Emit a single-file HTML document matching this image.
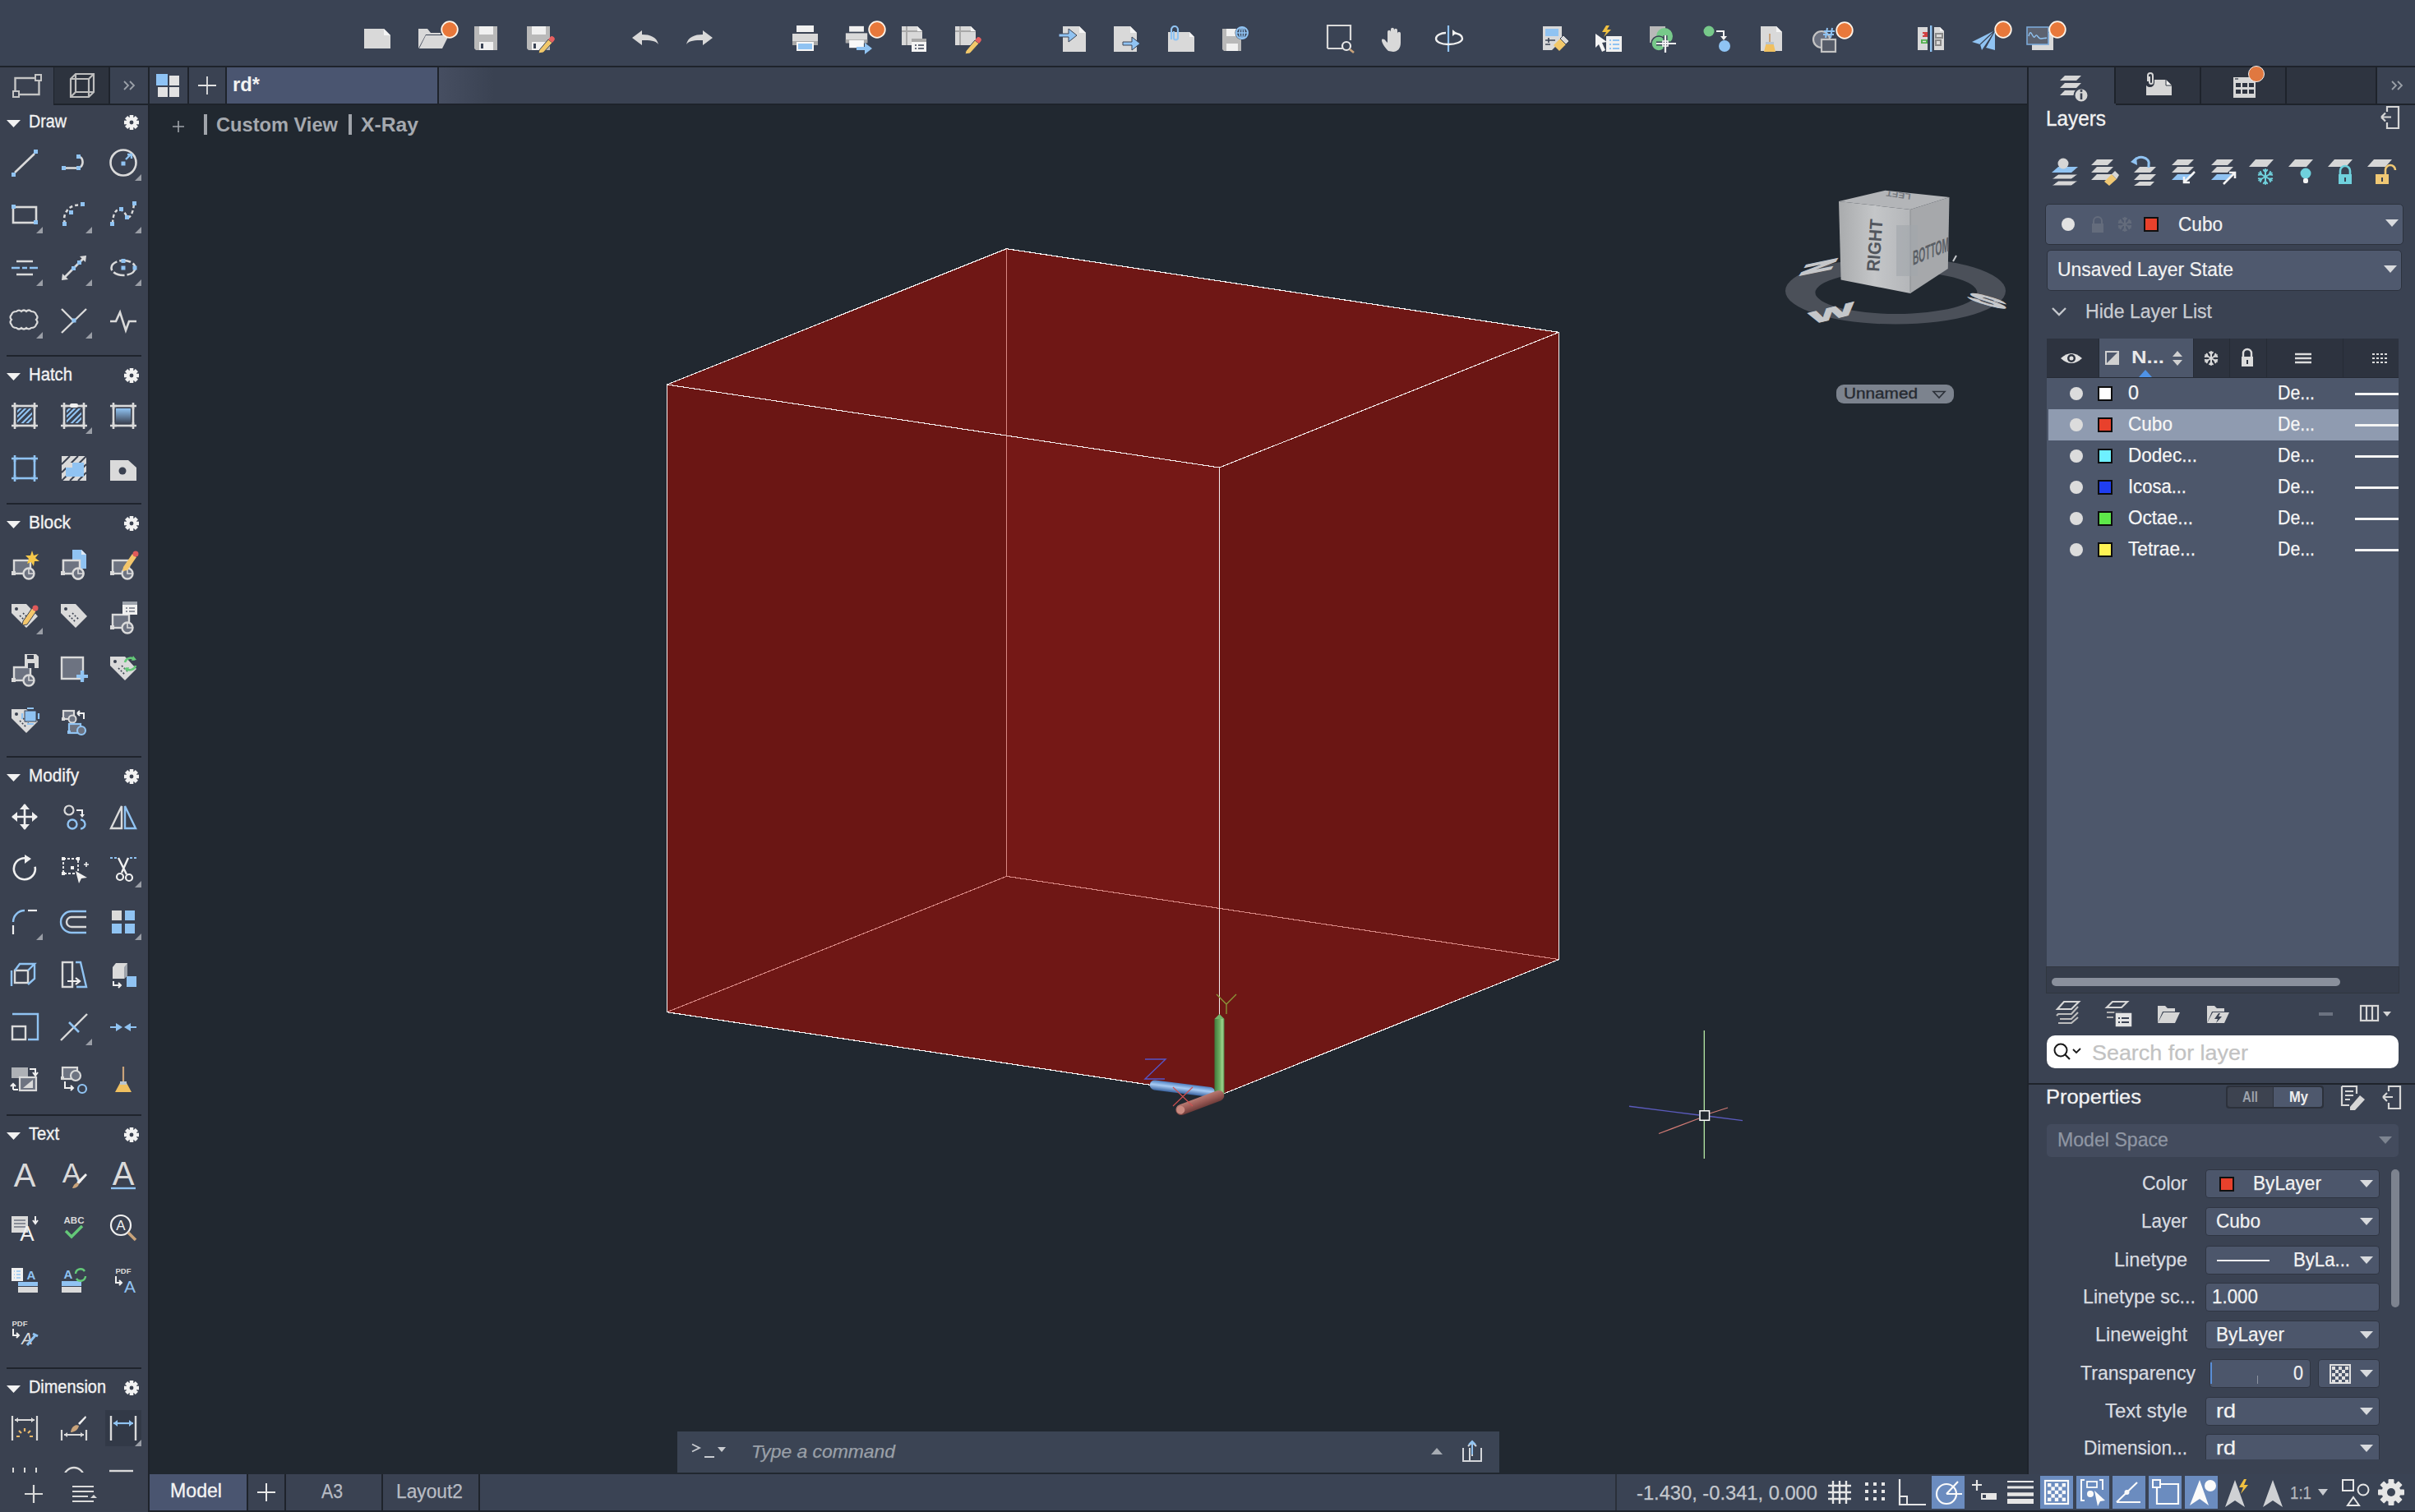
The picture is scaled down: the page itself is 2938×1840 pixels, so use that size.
<!DOCTYPE html>
<html><head><meta charset="utf-8"><style>
html,body{margin:0;padding:0;width:2938px;height:1840px;overflow:hidden;background:#212830;font-family:"Liberation Sans",sans-serif;}
body{position:relative}
div{box-sizing:border-box}
</style></head><body>
<div style="position:absolute;left:0px;top:0px;width:2938px;height:80px;background:#3a4354;"></div>
<div style="position:absolute;left:0px;top:80px;width:2938px;height:2px;background:#1e232b;"></div>
<div style="position:absolute;left:0px;top:82px;width:2938px;height:44px;background:#3a4252;"></div>
<div style="position:absolute;left:0px;top:126px;width:2938px;height:2px;background:#1e232b;"></div>
<div style="position:absolute;left:0px;top:82px;width:65px;height:46px;background:#3a4150;"></div>
<div style="position:absolute;left:65px;top:82px;width:1px;height:44px;background:#1e232b;"></div>
<div style="position:absolute;left:66px;top:82px;width:66px;height:44px;background:#2d333e;"></div>
<div style="position:absolute;left:132px;top:82px;width:2px;height:44px;background:#1e232b;"></div>
<div style="position:absolute;left:134px;top:82px;width:46px;height:44px;background:#3a4252;"></div>
<div style="position:absolute;left:180px;top:82px;width:2px;height:1758px;background:#1e232b;"></div>
<div style="position:absolute;left:0px;top:128px;width:180px;height:1712px;background:#3a4150;"></div>
<div style="position:absolute;left:182px;top:82px;width:46px;height:44px;background:#3a4252;"></div>
<div style="position:absolute;left:228px;top:82px;width:2px;height:44px;background:#1e232b;"></div>
<div style="position:absolute;left:230px;top:82px;width:44px;height:44px;background:#3a4252;"></div>
<div style="position:absolute;left:274px;top:82px;width:2px;height:44px;background:#1e232b;"></div>
<div style="position:absolute;left:276px;top:82px;width:256px;height:44px;background:#4a5570;"></div>
<div style="position:absolute;left:532px;top:82px;width:2px;height:44px;background:#1e232b;"></div>
<div style="position:absolute;left:534px;top:82px;width:1932px;height:44px;background:linear-gradient(90deg,#464e61,#3a4252 3.5%);"></div>
<div style="position:absolute;left:2466px;top:82px;width:2px;height:1712px;background:#1e232b;"></div>
<div style="position:absolute;left:182px;top:128px;width:2284px;height:1666px;background:#212830;"></div>
<div style="position:absolute;left:2468px;top:82px;width:470px;height:1712px;background:#3a4252;"></div>
<div style="position:absolute;left:190px;top:90px;width:14px;height:14px;background:#8ec3f5;"></div>
<div style="position:absolute;left:206px;top:92px;width:12px;height:12px;background:#e2e2e2;"></div>
<div style="position:absolute;left:192px;top:106px;width:12px;height:12px;background:#e2e2e2;"></div>
<div style="position:absolute;left:206px;top:106px;width:12px;height:12px;background:#e2e2e2;"></div>
<svg style="position:absolute;left:240px;top:92px;overflow:visible;" width="24" height="24" viewBox="0 0 24 24"><path d="M12 1 V23 M1 12 H23" stroke="#e2e2e2" stroke-width="1.8"/></svg>
<div style="position:absolute;left:282.50px;top:92.33px;font-size:23.26px;line-height:23.26px;color:#f2f2f2;white-space:nowrap;font-weight:bold;transform:scaleX(1.0214);transform-origin:0 0;">rd*</div>
<svg style="position:absolute;left:15px;top:90px;overflow:visible;" width="36" height="30" viewBox="0 0 36 30"><rect x="3.5" y="5" width="29" height="20" fill="none" stroke="#c4c4c4" stroke-width="2.4"/><rect x="28" y="1" width="7" height="7" fill="#3a4150" stroke="#c4c4c4" stroke-width="2"/><rect x="1" y="21" width="7" height="7" fill="#3a4150" stroke="#c4c4c4" stroke-width="2"/></svg>
<svg style="position:absolute;left:84px;top:88px;overflow:visible;" width="32" height="32" viewBox="0 0 32 32"><path d="M2 8 L8 2 H30 V24 L24 30 H2 Z M2 8 H24 V30 M24 8 L30 2 M8 2 V24 H30 M8 24 L2 30" fill="none" stroke="#bdbdbd" stroke-width="2.2"/></svg>
<svg style="position:absolute;left:149px;top:97px;overflow:visible;" width="18" height="14" viewBox="0 0 18 14"><path d="M2 2 L7 7 L2 12 M9 2 L14 7 L9 12" fill="none" stroke="#9ba0a8" stroke-width="1.8"/></svg>
<svg style="position:absolute;left:8px;top:146px;overflow:visible;" width="17" height="9" viewBox="0 0 17 9"><path d="M0 0 L17 0 L8.5 9 Z" fill="#f2f2f2"/></svg>
<div style="position:absolute;left:34.50px;top:136.56px;font-size:21.80px;line-height:21.80px;color:#f2f2f2;white-space:nowrap;transform:scaleX(0.9042);transform-origin:0 0;-webkit-text-stroke:0.35px #f2f2f2;">Draw</div>
<svg style="position:absolute;left:140px;top:129px;overflow:visible" width="40" height="40" viewBox="-20 -20 40 40"><rect x="-2.3" y="-9" width="4.6" height="18" fill="#f2f2f2" transform="rotate(0)"/><rect x="-2.3" y="-9" width="4.6" height="18" fill="#f2f2f2" transform="rotate(45)"/><rect x="-2.3" y="-9" width="4.6" height="18" fill="#f2f2f2" transform="rotate(90)"/><rect x="-2.3" y="-9" width="4.6" height="18" fill="#f2f2f2" transform="rotate(135)"/><circle r="6.4799999999999995" fill="#f2f2f2"/><circle r="2.43" fill="#3a4150"/></svg>
<svg style="position:absolute;left:10px;top:178px;overflow:visible" width="40" height="40" viewBox="-20 -20 40 40"><line x1="-12" y1="12" x2="12" y2="-11" stroke="#dadada" stroke-width="2.6"/><rect x="-16" y="12" width="5" height="5" fill="#90c3f2"/><rect x="11" y="-16" width="5" height="5" fill="#90c3f2"/></svg>
<svg style="position:absolute;left:70px;top:178px;overflow:visible" width="40" height="40" viewBox="-20 -20 40 40"><line x1="-11" y1="6.5" x2="3" y2="6.5" stroke="#dadada" stroke-width="2.6"/><path d="M5 -8 A7.5 7.5 0 0 1 5 6.5" fill="none" stroke="#dadada" stroke-width="2.6"/><rect x="-15" y="4" width="5" height="5" fill="#90c3f2"/><rect x="3" y="4" width="5" height="5" fill="#90c3f2"/><rect x="3" y="-10" width="5" height="5" fill="#90c3f2"/></svg>
<svg style="position:absolute;left:130px;top:178px;overflow:visible" width="40" height="40" viewBox="-20 -20 40 40"><circle r="15.5" fill="none" stroke="#dadada" stroke-width="2.6"/><rect x="-2.5" y="-1.5" width="5" height="5" fill="#90c3f2"/><path d="M3 -4 L9 -10 M5 -10 L10 -10 L10 -5" stroke="#90c3f2" stroke-width="2.4" fill="none"/></svg>
<svg style="position:absolute;left:130px;top:178px;overflow:visible" width="40" height="40" viewBox="-20 -20 40 40"><path d="M22 14 L22 22 L14 22 Z" fill="#9a9ea6"/></svg>
<svg style="position:absolute;left:10px;top:242px;overflow:visible" width="40" height="40" viewBox="-20 -20 40 40"><rect x="-14" y="-10" width="28" height="19" fill="none" stroke="#dadada" stroke-width="2.6"/><rect x="-16" y="-13" width="5" height="5" fill="#90c3f2"/><rect x="11" y="6" width="5" height="5" fill="#90c3f2"/></svg>
<svg style="position:absolute;left:10px;top:242px;overflow:visible" width="40" height="40" viewBox="-20 -20 40 40"><path d="M22 14 L22 22 L14 22 Z" fill="#9a9ea6"/></svg>
<svg style="position:absolute;left:70px;top:242px;overflow:visible" width="40" height="40" viewBox="-20 -20 40 40"><path d="M-11 10 A17 17 0 0 1 9 -12" fill="none" stroke="#dadada" stroke-width="2.6" stroke-dasharray="4 3"/><rect x="-14" y="8" width="5" height="5" fill="#90c3f2"/><rect x="-6" y="-6" width="5" height="5" fill="#90c3f2"/><rect x="8" y="-16" width="5" height="5" fill="#90c3f2"/></svg>
<svg style="position:absolute;left:70px;top:242px;overflow:visible" width="40" height="40" viewBox="-20 -20 40 40"><path d="M22 14 L22 22 L14 22 Z" fill="#9a9ea6"/></svg>
<svg style="position:absolute;left:130px;top:242px;overflow:visible" width="40" height="40" viewBox="-20 -20 40 40"><path d="M-13 10 C-12 -14 0 -8 4 1 C7 6 12 -2 13 -14" fill="none" stroke="#dadada" stroke-width="2.4" stroke-dasharray="4 3"/><rect x="-16" y="8" width="5" height="5" fill="#90c3f2"/><rect x="-5" y="-10" width="5" height="5" fill="#90c3f2"/><rect x="2" y="0" width="5" height="5" fill="#90c3f2"/><rect x="11" y="-17" width="5" height="5" fill="#90c3f2"/></svg>
<svg style="position:absolute;left:130px;top:242px;overflow:visible" width="40" height="40" viewBox="-20 -20 40 40"><path d="M22 14 L22 22 L14 22 Z" fill="#9a9ea6"/></svg>
<svg style="position:absolute;left:10px;top:306px;overflow:visible" width="40" height="40" viewBox="-20 -20 40 40"><path d="M-10 -8 H10 M-10 8 H10" stroke="#dadada" stroke-width="2.4"/><path d="M-16 0 H-6 M-3 0 H3 M6 0 H16" stroke="#90c3f2" stroke-width="2.4"/></svg>
<svg style="position:absolute;left:10px;top:306px;overflow:visible" width="40" height="40" viewBox="-20 -20 40 40"><path d="M22 14 L22 22 L14 22 Z" fill="#9a9ea6"/></svg>
<svg style="position:absolute;left:70px;top:306px;overflow:visible" width="40" height="40" viewBox="-20 -20 40 40"><line x1="-13" y1="13" x2="13" y2="-13" stroke="#dadada" stroke-width="2.6"/><path d="M-15 15 L-14 7 L-7 14 Z M15 -15 L14 -7 L7 -14 Z" fill="#dadada"/><rect x="-3" y="-2" width="5" height="5" fill="#90c3f2"/><rect x="4" y="-9" width="5" height="5" fill="#90c3f2"/></svg>
<svg style="position:absolute;left:70px;top:306px;overflow:visible" width="40" height="40" viewBox="-20 -20 40 40"><path d="M22 14 L22 22 L14 22 Z" fill="#9a9ea6"/></svg>
<svg style="position:absolute;left:130px;top:306px;overflow:visible" width="40" height="40" viewBox="-20 -20 40 40"><ellipse rx="14.5" ry="9" fill="none" stroke="#dadada" stroke-width="2.6" stroke-dasharray="14 3"/><rect x="-2.5" y="-2.5" width="5" height="5" fill="#90c3f2"/><rect x="-2.5" y="-11" width="5" height="5" fill="#90c3f2"/><rect x="11.5" y="-2.5" width="5" height="5" fill="#90c3f2"/></svg>
<svg style="position:absolute;left:130px;top:306px;overflow:visible" width="40" height="40" viewBox="-20 -20 40 40"><path d="M22 14 L22 22 L14 22 Z" fill="#9a9ea6"/></svg>
<svg style="position:absolute;left:10px;top:370px;overflow:visible" width="40" height="40" viewBox="-20 -20 40 40"><path d="M-10 -11 q3 -3 6 0 q3 -3 6 0 q3 -3 6 0 q5 0 6 4 q3 3 0 6 q3 3 0 6 q-1 4 -6 4 q-3 3 -6 0 q-3 3 -6 0 q-3 3 -6 0 q-5 0 -6 -4 q-3 -3 0 -6 q-3 -3 0 -6 q1 -4 6 -4 Z" fill="none" stroke="#dadada" stroke-width="2.2"/></svg>
<svg style="position:absolute;left:10px;top:370px;overflow:visible" width="40" height="40" viewBox="-20 -20 40 40"><path d="M22 14 L22 22 L14 22 Z" fill="#9a9ea6"/></svg>
<svg style="position:absolute;left:70px;top:370px;overflow:visible" width="40" height="40" viewBox="-20 -20 40 40"><path d="M-15 -14 L-1 0 M15 -14 L-15 15" stroke="#dadada" stroke-width="2.4"/><rect x="-2.5" y="-2.5" width="5" height="5" fill="#90c3f2"/></svg>
<svg style="position:absolute;left:70px;top:370px;overflow:visible" width="40" height="40" viewBox="-20 -20 40 40"><path d="M22 14 L22 22 L14 22 Z" fill="#9a9ea6"/></svg>
<svg style="position:absolute;left:130px;top:370px;overflow:visible" width="40" height="40" viewBox="-20 -20 40 40"><path d="M-16 1 H-9 L-4 -10 L3 12 L7 1 H16" fill="none" stroke="#dadada" stroke-width="2.6"/></svg>
<div style="position:absolute;left:8px;top:432px;width:164px;height:2px;background:#1f242d;"></div>
<svg style="position:absolute;left:8px;top:454px;overflow:visible;" width="17" height="9" viewBox="0 0 17 9"><path d="M0 0 L17 0 L8.5 9 Z" fill="#f2f2f2"/></svg>
<div style="position:absolute;left:34.50px;top:444.56px;font-size:21.80px;line-height:21.80px;color:#f2f2f2;white-space:nowrap;transform:scaleX(0.9306);transform-origin:0 0;-webkit-text-stroke:0.35px #f2f2f2;">Hatch</div>
<svg style="position:absolute;left:140px;top:437px;overflow:visible" width="40" height="40" viewBox="-20 -20 40 40"><rect x="-2.3" y="-9" width="4.6" height="18" fill="#f2f2f2" transform="rotate(0)"/><rect x="-2.3" y="-9" width="4.6" height="18" fill="#f2f2f2" transform="rotate(45)"/><rect x="-2.3" y="-9" width="4.6" height="18" fill="#f2f2f2" transform="rotate(90)"/><rect x="-2.3" y="-9" width="4.6" height="18" fill="#f2f2f2" transform="rotate(135)"/><circle r="6.4799999999999995" fill="#f2f2f2"/><circle r="2.43" fill="#3a4150"/></svg>
<svg style="position:absolute;left:10px;top:486px;overflow:visible" width="40" height="40" viewBox="-20 -20 40 40"><rect x="-12" y="-12" width="24" height="24" fill="none" stroke="#dadada" stroke-width="2.6"/><path d="M-16 -12 H-8 M8 -12 H16 M-16 12 H-8 M8 12 H16 M-12 -16 V-8 M-12 8 V16 M12 -16 V-8 M12 8 V16" stroke="#dadada" stroke-width="2.6"/><clipPath id="hc"><rect x="-9" y="-9" width="18" height="18"/></clipPath><g clip-path="url(#hc)" stroke="#90c3f2" stroke-width="2.2"><path d="M-14 6 L6 -14 M-14 12 L12 -14 M-8 14 L14 -8 M-2 14 L14 -2 M-14 0 L0 -14"/></g></svg>
<svg style="position:absolute;left:70px;top:486px;overflow:visible" width="40" height="40" viewBox="-20 -20 40 40"><rect x="-12" y="-12" width="24" height="24" fill="none" stroke="#dadada" stroke-width="2.6"/><path d="M-16 -12 H-8 M8 -12 H16 M-16 12 H-8 M8 12 H16 M-12 -16 V-8 M-12 8 V16 M12 -16 V-8 M12 8 V16" stroke="#dadada" stroke-width="2.6"/><clipPath id="hc2"><rect x="-9" y="-9" width="18" height="18"/></clipPath><g clip-path="url(#hc2)" stroke="#90c3f2" stroke-width="2.2"><path d="M-14 6 L6 -14 M-14 12 L12 -14 M-8 14 L14 -8 M-2 14 L14 -2 M-14 0 L0 -14"/></g><rect x="-5" y="-15" width="10" height="5" rx="2" fill="#f0f0f0"/></svg>
<svg style="position:absolute;left:70px;top:486px;overflow:visible" width="40" height="40" viewBox="-20 -20 40 40"><path d="M22 14 L22 22 L14 22 Z" fill="#9a9ea6"/></svg>
<svg style="position:absolute;left:130px;top:486px;overflow:visible" width="40" height="40" viewBox="-20 -20 40 40"><rect x="-12" y="-12" width="24" height="24" fill="none" stroke="#dadada" stroke-width="2.6"/><path d="M-16 -12 H-8 M8 -12 H16 M-16 12 H-8 M8 12 H16 M-12 -16 V-8 M-12 8 V16 M12 -16 V-8 M12 8 V16" stroke="#dadada" stroke-width="2.6"/><defs><linearGradient id="gd" x1="0" y1="0" x2="0" y2="1"><stop offset="0" stop-color="#90c3f2"/><stop offset="1" stop-color="#3d4556"/></linearGradient></defs><rect x="-9" y="-9" width="18" height="18" fill="url(#gd)"/></svg>
<svg style="position:absolute;left:10px;top:550px;overflow:visible" width="40" height="40" viewBox="-20 -20 40 40"><rect x="-12" y="-12" width="24" height="24" fill="none" stroke="#90c3f2" stroke-width="2.6"/><path d="M-16 -12 H-8 M8 -12 H16 M-16 12 H-8 M8 12 H16 M-12 -16 V-8 M-12 8 V16 M12 -16 V-8 M12 8 V16" stroke="#90c3f2" stroke-width="2.6"/></svg>
<svg style="position:absolute;left:70px;top:550px;overflow:visible" width="40" height="40" viewBox="-20 -20 40 40"><rect x="-15" y="-15" width="30" height="30" fill="#dadada"/><g stroke="#3a4150" stroke-width="2"><path d="M-15 -5 L-5 -15 M-15 5 L5 -15 M-15 15 L15 -15 M-5 15 L15 -5 M5 15 L15 5"/></g><rect x="-10" y="-7" width="22" height="17" fill="#90c3f2"/><rect x="-10" y="-7" width="8" height="6" fill="#dadada"/></svg>
<svg style="position:absolute;left:130px;top:550px;overflow:visible" width="40" height="40" viewBox="-20 -20 40 40"><path d="M-16 -10 L6 -10 L16 -1 L16 15 L-16 15 Z" fill="#dadada"/><circle cx="-1" cy="3" r="4.5" fill="#3a4150"/></svg>
<div style="position:absolute;left:8px;top:612px;width:164px;height:2px;background:#1f242d;"></div>
<svg style="position:absolute;left:8px;top:634px;overflow:visible;" width="17" height="9" viewBox="0 0 17 9"><path d="M0 0 L17 0 L8.5 9 Z" fill="#f2f2f2"/></svg>
<div style="position:absolute;left:34.50px;top:624.56px;font-size:21.80px;line-height:21.80px;color:#f2f2f2;white-space:nowrap;transform:scaleX(0.9566);transform-origin:0 0;-webkit-text-stroke:0.35px #f2f2f2;">Block</div>
<svg style="position:absolute;left:140px;top:617px;overflow:visible" width="40" height="40" viewBox="-20 -20 40 40"><rect x="-2.3" y="-9" width="4.6" height="18" fill="#f2f2f2" transform="rotate(0)"/><rect x="-2.3" y="-9" width="4.6" height="18" fill="#f2f2f2" transform="rotate(45)"/><rect x="-2.3" y="-9" width="4.6" height="18" fill="#f2f2f2" transform="rotate(90)"/><rect x="-2.3" y="-9" width="4.6" height="18" fill="#f2f2f2" transform="rotate(135)"/><circle r="6.4799999999999995" fill="#f2f2f2"/><circle r="2.43" fill="#3a4150"/></svg>
<svg style="position:absolute;left:10px;top:666px;overflow:visible" width="40" height="40" viewBox="-20 -20 40 40"><g transform="translate(0,0)"><rect x="-13" y="-4" width="20" height="16" fill="#6d7381" stroke="#dadada" stroke-width="2.4"/><rect x="-16" y="9" width="5" height="5" fill="#dadada"/><circle cx="5" cy="12" r="6.5" fill="#6d7381" stroke="#dadada" stroke-width="2.4"/><path d="M5 6 V12 H11" stroke="#dadada" stroke-width="1.6" fill="none"/></g><path d="M9 -16 L11 -10 L17 -12 L13 -7 L18 -3 L12 -3 L11 3 L8 -2 L3 0 L5 -6 L1 -10 L7 -10 Z" fill="#f6c84a"/></svg>
<svg style="position:absolute;left:70px;top:666px;overflow:visible" width="40" height="40" viewBox="-20 -20 40 40"><g transform="translate(0,0)"><rect x="-13" y="-4" width="20" height="16" fill="#6d7381" stroke="#dadada" stroke-width="2.4"/><rect x="-16" y="9" width="5" height="5" fill="#dadada"/><circle cx="5" cy="12" r="6.5" fill="#6d7381" stroke="#dadada" stroke-width="2.4"/><path d="M5 6 V12 H11" stroke="#dadada" stroke-width="1.6" fill="none"/></g><path d="M-2 -17 H9 L15 -11 V6 H-2 Z" fill="#90c3f2"/><path d="M9 -17 V-11 H15" fill="#dfe9f5"/><g transform="translate(0,0)"><rect x="-13" y="-4" width="20" height="16" fill="#6d7381" stroke="#dadada" stroke-width="2.4"/><rect x="-16" y="9" width="5" height="5" fill="#dadada"/><circle cx="5" cy="12" r="6.5" fill="#6d7381" stroke="#dadada" stroke-width="2.4"/><path d="M5 6 V12 H11" stroke="#dadada" stroke-width="1.6" fill="none"/></g></svg>
<svg style="position:absolute;left:130px;top:666px;overflow:visible" width="40" height="40" viewBox="-20 -20 40 40"><g transform="translate(0,0)"><rect x="-13" y="-4" width="20" height="16" fill="#6d7381" stroke="#dadada" stroke-width="2.4"/><rect x="-16" y="9" width="5" height="5" fill="#dadada"/><circle cx="5" cy="12" r="6.5" fill="#6d7381" stroke="#dadada" stroke-width="2.4"/><path d="M5 6 V12 H11" stroke="#dadada" stroke-width="1.6" fill="none"/></g><path d="M0 4 L11 -12 L16 -8 L5 8 L-1 9 Z" fill="#f4c66b"/><circle cx="15" cy="-12" r="3.5" fill="#e05a5a"/></svg>
<svg style="position:absolute;left:10px;top:730px;overflow:visible" width="40" height="40" viewBox="-20 -20 40 40"><path d="M-16 -15 H2 L16 0 L2 14 L-16 -4 Z" fill="#dadada"/><circle cx="-10" cy="-9" r="2" fill="#3a4150"/><path d="M-6 -1 L2 7 M-2 -4 L6 4" stroke="#3a4150" stroke-width="1.6" stroke-dasharray="2 2"/><path d="M-2 6 L9 -10 L14 -6 L3 10 L-3 11 Z" fill="#f4c66b" stroke="#3a4150" stroke-width="1"/><circle cx="13" cy="-10" r="3.5" fill="#e05a5a"/></svg>
<svg style="position:absolute;left:10px;top:730px;overflow:visible" width="40" height="40" viewBox="-20 -20 40 40"><path d="M22 14 L22 22 L14 22 Z" fill="#9a9ea6"/></svg>
<svg style="position:absolute;left:70px;top:730px;overflow:visible" width="40" height="40" viewBox="-20 -20 40 40"><g transform="rotate(0)"><path d="M-16 -15 H2 L16 0 L2 14 L-16 -4 Z" fill="#dadada"/><circle cx="-10" cy="-9" r="2" fill="#3a4150"/><path d="M-6 -1 L2 7 M-2 -4 L6 4" stroke="#3a4150" stroke-width="1.6" stroke-dasharray="2 2"/></g></svg>
<svg style="position:absolute;left:130px;top:730px;overflow:visible" width="40" height="40" viewBox="-20 -20 40 40"><g transform="translate(0,2)"><rect x="-13" y="-4" width="20" height="16" fill="#6d7381" stroke="#dadada" stroke-width="2.4"/><rect x="-16" y="9" width="5" height="5" fill="#dadada"/><circle cx="5" cy="12" r="6.5" fill="#6d7381" stroke="#dadada" stroke-width="2.4"/><path d="M5 6 V12 H11" stroke="#dadada" stroke-width="1.6" fill="none"/></g><rect x="-1" y="-18" width="18" height="16" fill="#f0f0f0"/><rect x="-1" y="-18" width="18" height="4" fill="#9da3ad"/><path d="M3 -10 H5 M7 -10 H14 M3 -6 H5 M7 -6 H14" stroke="#6d7381" stroke-width="1.6"/></svg>
<svg style="position:absolute;left:10px;top:794px;overflow:visible" width="40" height="40" viewBox="-20 -20 40 40"><g transform="translate(0,2)"><rect x="-13" y="-4" width="20" height="16" fill="#6d7381" stroke="#dadada" stroke-width="2.4"/><rect x="-16" y="9" width="5" height="5" fill="#dadada"/><circle cx="5" cy="12" r="6.5" fill="#6d7381" stroke="#dadada" stroke-width="2.4"/><path d="M5 6 V12 H11" stroke="#dadada" stroke-width="1.6" fill="none"/></g><path d="M0 -18 H14 L17 -15 V-1 H0 Z" fill="#dadada"/><rect x="3" y="-17" width="8" height="5" fill="#3a4150"/><rect x="4" y="-7" width="8" height="6" fill="#3a4150"/></svg>
<svg style="position:absolute;left:70px;top:794px;overflow:visible" width="40" height="40" viewBox="-20 -20 40 40"><rect x="-15" y="-14" width="26" height="26" fill="#6d7381" stroke="#dadada" stroke-width="2.4"/><path d="M10 2 V16 M3 9 H17" stroke="#90c3f2" stroke-width="4.2"/></svg>
<svg style="position:absolute;left:130px;top:794px;overflow:visible" width="40" height="40" viewBox="-20 -20 40 40"><path d="M-16 -15 H2 L16 0 L2 14 L-16 -4 Z" fill="#dadada"/><circle cx="-10" cy="-9" r="2" fill="#3a4150"/><path d="M-6 -1 L2 7 M-2 -4 L6 4" stroke="#3a4150" stroke-width="1.6" stroke-dasharray="2 2"/><path d="M2 -8 A7 7 0 0 1 14 -11 M15 -4 A7 7 0 0 1 3 -1" stroke="#64c878" stroke-width="2.6" fill="none"/><path d="M12 -16 L16 -11 L10 -10 Z M5 4 L1 -1 L7 -2 Z" fill="#64c878"/></svg>
<svg style="position:absolute;left:10px;top:858px;overflow:visible" width="40" height="40" viewBox="-20 -20 40 40"><path d="M-16 -15 H2 L16 0 L2 14 L-16 -4 Z" fill="#dadada"/><circle cx="-10" cy="-9" r="2" fill="#3a4150"/><path d="M-6 -1 L2 7 M-2 -4 L6 4" stroke="#3a4150" stroke-width="1.6" stroke-dasharray="2 2"/><rect x="0" y="-13" width="14" height="13" fill="#90c3f2" stroke="#3a4150" stroke-width="1"/><path d="M-3 -10 V-3 M17 -10 V-3 M3 -16 H11 M3 3 H11" stroke="#90c3f2" stroke-width="2.2"/></svg>
<svg style="position:absolute;left:70px;top:858px;overflow:visible" width="40" height="40" viewBox="-20 -20 40 40"><rect x="-13" y="-13" width="13" height="10" fill="#6d7381" stroke="#dadada" stroke-width="2.2"/><rect x="-15" y="-5" width="4" height="4" fill="#dadada"/><circle cx="-2" cy="-3" r="4.5" fill="#6d7381" stroke="#dadada" stroke-width="2"/><path d="M4 -10 H12 V-3 M4 -10 L7 -13 M4 -10 L7 -7" stroke="#f0f0f0" stroke-width="2" fill="none"/><rect x="-6" y="3" width="14" height="11" fill="#6d7381" stroke="#90c3f2" stroke-width="2.2"/><rect x="-8" y="11" width="4" height="4" fill="#90c3f2"/><circle cx="9" cy="11" r="5" fill="#6d7381" stroke="#90c3f2" stroke-width="2.2"/></svg>
<div style="position:absolute;left:8px;top:920px;width:164px;height:2px;background:#1f242d;"></div>
<svg style="position:absolute;left:8px;top:942px;overflow:visible;" width="17" height="9" viewBox="0 0 17 9"><path d="M0 0 L17 0 L8.5 9 Z" fill="#f2f2f2"/></svg>
<div style="position:absolute;left:34.50px;top:932.56px;font-size:21.80px;line-height:21.80px;color:#f2f2f2;white-space:nowrap;transform:scaleX(0.9500);transform-origin:0 0;-webkit-text-stroke:0.35px #f2f2f2;">Modify</div>
<svg style="position:absolute;left:140px;top:925px;overflow:visible" width="40" height="40" viewBox="-20 -20 40 40"><rect x="-2.3" y="-9" width="4.6" height="18" fill="#f2f2f2" transform="rotate(0)"/><rect x="-2.3" y="-9" width="4.6" height="18" fill="#f2f2f2" transform="rotate(45)"/><rect x="-2.3" y="-9" width="4.6" height="18" fill="#f2f2f2" transform="rotate(90)"/><rect x="-2.3" y="-9" width="4.6" height="18" fill="#f2f2f2" transform="rotate(135)"/><circle r="6.4799999999999995" fill="#f2f2f2"/><circle r="2.43" fill="#3a4150"/></svg>
<svg style="position:absolute;left:10px;top:974px;overflow:visible" width="40" height="40" viewBox="-20 -20 40 40"><path d="M0 -15 V15 M-15 0 H15" stroke="#f0f0f0" stroke-width="2.6"/><path d="M0 -16 L-6 -9 H6 Z M0 16 L-6 9 H6 Z M-16 0 L-9 -6 V6 Z M16 0 L9 -6 V6 Z" fill="#f0f0f0"/></svg>
<svg style="position:absolute;left:70px;top:974px;overflow:visible" width="40" height="40" viewBox="-20 -20 40 40"><circle cx="-6" cy="-8" r="5.5" fill="none" stroke="#dadada" stroke-width="2.2"/><path d="M3 -8 H10 V-2" stroke="#f0f0f0" stroke-width="2" fill="none"/><path d="M7 -3 L13 -3 L10 1 Z" fill="#f0f0f0"/><circle cx="-2" cy="9" r="5.5" fill="none" stroke="#90c3f2" stroke-width="2.4"/><path d="M8 3.5 A5.5 5.5 0 1 1 8 14.5" stroke="#90c3f2" stroke-width="2.4" fill="none"/></svg>
<svg style="position:absolute;left:130px;top:974px;overflow:visible" width="40" height="40" viewBox="-20 -20 40 40"><path d="M-2 -13 L-15 14 H-2 Z" fill="none" stroke="#dadada" stroke-width="2.4"/><path d="M2 -13 L15 14 H2 Z" fill="none" stroke="#90c3f2" stroke-width="2.4"/></svg>
<svg style="position:absolute;left:10px;top:1038px;overflow:visible" width="40" height="40" viewBox="-20 -20 40 40"><path d="M8 -11 A13 13 0 1 0 13 -1" fill="none" stroke="#f0f0f0" stroke-width="2.6" transform="rotate(-10)"/><path d="M0 -18 L8 -13 L0 -7 Z" fill="#f0f0f0"/></svg>
<svg style="position:absolute;left:70px;top:1038px;overflow:visible" width="40" height="40" viewBox="-20 -20 40 40"><rect x="-13" y="-13" width="18" height="18" fill="none" stroke="#f0f0f0" stroke-width="1.8" stroke-dasharray="3 2"/><rect x="-15" y="-15" width="4" height="4" fill="#f0f0f0"/><rect x="3" y="-15" width="4" height="4" fill="#f0f0f0"/><rect x="-15" y="3" width="4" height="4" fill="#f0f0f0"/><rect x="-4" y="-4" width="4" height="4" fill="#f0f0f0"/><path d="M2 2 L16 10 L9 11 L6 17 Z" fill="#f0f0f0"/><path d="M12 -6 H18 M15 -9 V-3" stroke="#f0f0f0" stroke-width="1.6"/></svg>
<svg style="position:absolute;left:130px;top:1038px;overflow:visible" width="40" height="40" viewBox="-20 -20 40 40"><path d="M-16 -14 H-8 M8 -14 H16" stroke="#90c3f2" stroke-width="2" stroke-dasharray="3 2"/><path d="M-6 -14 L4 6 M6 -14 L-2 4" stroke="#f0f0f0" stroke-width="2.4"/><circle cx="-4" cy="9" r="4" fill="none" stroke="#f0f0f0" stroke-width="2.2"/><circle cx="7" cy="10" r="4" fill="none" stroke="#f0f0f0" stroke-width="2.2"/></svg>
<svg style="position:absolute;left:130px;top:1038px;overflow:visible" width="40" height="40" viewBox="-20 -20 40 40"><path d="M22 14 L22 22 L14 22 Z" fill="#9a9ea6"/></svg>
<svg style="position:absolute;left:10px;top:1102px;overflow:visible" width="40" height="40" viewBox="-20 -20 40 40"><path d="M-14 15 V4" stroke="#f0f0f0" stroke-width="2.2"/><path d="M-14 0 A14 14 0 0 1 0 -14" stroke="#90c3f2" stroke-width="2.4" fill="none"/><path d="M4 -14 H15" stroke="#f0f0f0" stroke-width="2.2"/></svg>
<svg style="position:absolute;left:10px;top:1102px;overflow:visible" width="40" height="40" viewBox="-20 -20 40 40"><path d="M22 14 L22 22 L14 22 Z" fill="#9a9ea6"/></svg>
<svg style="position:absolute;left:70px;top:1102px;overflow:visible" width="40" height="40" viewBox="-20 -20 40 40"><path d="M15 -13 H-3 A13 13 0 0 0 -3 13 H15" stroke="#90c3f2" stroke-width="2.4" fill="none"/><path d="M15 -6 H-3 A6 6 0 0 0 -3 6 H15" stroke="#dadada" stroke-width="2.4" fill="none"/></svg>
<svg style="position:absolute;left:130px;top:1102px;overflow:visible" width="40" height="40" viewBox="-20 -20 40 40"><rect x="-14" y="-14" width="12" height="12" fill="#dadada"/><rect x="2" y="-14" width="12" height="12" fill="#90c3f2"/><rect x="-14" y="2" width="12" height="12" fill="#90c3f2"/><rect x="2" y="2" width="12" height="12" fill="#90c3f2"/></svg>
<svg style="position:absolute;left:130px;top:1102px;overflow:visible" width="40" height="40" viewBox="-20 -20 40 40"><path d="M22 14 L22 22 L14 22 Z" fill="#9a9ea6"/></svg>
<svg style="position:absolute;left:10px;top:1166px;overflow:visible" width="40" height="40" viewBox="-20 -20 40 40"><rect x="-12" y="-5" width="16" height="15" fill="none" stroke="#dadada" stroke-width="2.4"/><path d="M-16 -5 V14 M-12 -5 L-6 -13 H12 L4 -5 M12 -13 V5 L4 12" stroke="#90c3f2" stroke-width="2.4" fill="none"/></svg>
<svg style="position:absolute;left:70px;top:1166px;overflow:visible" width="40" height="40" viewBox="-20 -20 40 40"><rect x="-14" y="-15" width="12" height="30" fill="none" stroke="#dadada" stroke-width="2.4"/><path d="M2 -15 H8 L15 15 H3" stroke="#90c3f2" stroke-width="2.4" fill="none"/><path d="M-8 8 H6 M2 4 L7 8 L2 12" stroke="#f0f0f0" stroke-width="2.2" fill="none"/></svg>
<svg style="position:absolute;left:130px;top:1166px;overflow:visible" width="40" height="40" viewBox="-20 -20 40 40"><path d="M-13 -9 L-9 -14 H5 V1 L1 5 H-13 Z" fill="#dadada"/><path d="M1 -9 L5 -14 V1 L1 5 Z" fill="#9ea3ab"/><rect x="4" y="2" width="12" height="13" fill="#90c3f2"/><path d="M-12 8 V13 H-3 M-6 10 L-3 13 L-6 16" stroke="#f0f0f0" stroke-width="2" fill="none"/></svg>
<svg style="position:absolute;left:10px;top:1230px;overflow:visible" width="40" height="40" viewBox="-20 -20 40 40"><path d="M-15 -16 H16 V15 H4" stroke="#90c3f2" stroke-width="2.4" fill="none"/><rect x="-15" y="-1" width="16" height="16" fill="none" stroke="#dadada" stroke-width="2.4"/></svg>
<svg style="position:absolute;left:70px;top:1230px;overflow:visible" width="40" height="40" viewBox="-20 -20 40 40"><path d="M-16 16 L16 -16" stroke="#dadada" stroke-width="2.4"/><path d="M-6 -6 L6 6" stroke="#90c3f2" stroke-width="2.6"/></svg>
<svg style="position:absolute;left:70px;top:1230px;overflow:visible" width="40" height="40" viewBox="-20 -20 40 40"><path d="M22 14 L22 22 L14 22 Z" fill="#9a9ea6"/></svg>
<svg style="position:absolute;left:130px;top:1230px;overflow:visible" width="40" height="40" viewBox="-20 -20 40 40"><path d="M-16 0 H-3 M3 0 H16" stroke="#90c3f2" stroke-width="2.2"/><path d="M-1 0 L-9 -5 V5 Z M1 0 L9 -5 V5 Z" fill="#90c3f2"/></svg>
<svg style="position:absolute;left:10px;top:1294px;overflow:visible" width="40" height="40" viewBox="-20 -20 40 40"><rect x="-16" y="-15" width="20" height="13" fill="#aeb1b6"/><rect x="-6" y="-3" width="20" height="16" fill="#6d7381" stroke="#dadada" stroke-width="2.2"/><path d="M-2 10 L10 0 V10 Z" fill="#dadada"/><path d="M6 -13 H13 V-6 M10 -9 L13 -5 L16 -9" stroke="#f0f0f0" stroke-width="2" fill="none"/><path d="M-14 12 V5 M-17 8 L-14 5 L-11 8 M-14 12 H-8" stroke="#f0f0f0" stroke-width="2" fill="none"/></svg>
<svg style="position:absolute;left:70px;top:1294px;overflow:visible" width="40" height="40" viewBox="-20 -20 40 40"><rect x="-14" y="-15" width="18" height="14" fill="#6d7381" stroke="#dadada" stroke-width="2.2"/><rect x="-16" y="-4" width="4" height="4" fill="#dadada"/><circle cx="2" cy="-5" r="6" fill="#6d7381" stroke="#dadada" stroke-width="2.2"/><path d="M-11 2 V10 H-1 M-4 7 L-1 10 L-4 13" stroke="#f0f0f0" stroke-width="2" fill="none"/><circle cx="10" cy="11" r="5" fill="none" stroke="#90c3f2" stroke-width="2.2"/></svg>
<svg style="position:absolute;left:130px;top:1294px;overflow:visible" width="40" height="40" viewBox="-20 -20 40 40"><path d="M0 -16 V2" stroke="#c9a37a" stroke-width="2.2"/><path d="M-3 2 H3 L10 15 H-10 Z" fill="#f0c060"/><path d="M-4 2 H4 V6 H-4Z" fill="#b9c5d0"/></svg>
<div style="position:absolute;left:8px;top:1356px;width:164px;height:2px;background:#1f242d;"></div>
<svg style="position:absolute;left:8px;top:1378px;overflow:visible;" width="17" height="9" viewBox="0 0 17 9"><path d="M0 0 L17 0 L8.5 9 Z" fill="#f2f2f2"/></svg>
<div style="position:absolute;left:34.50px;top:1368.56px;font-size:21.80px;line-height:21.80px;color:#f2f2f2;white-space:nowrap;transform:scaleX(0.9254);transform-origin:0 0;-webkit-text-stroke:0.35px #f2f2f2;">Text</div>
<svg style="position:absolute;left:140px;top:1361px;overflow:visible" width="40" height="40" viewBox="-20 -20 40 40"><rect x="-2.3" y="-9" width="4.6" height="18" fill="#f2f2f2" transform="rotate(0)"/><rect x="-2.3" y="-9" width="4.6" height="18" fill="#f2f2f2" transform="rotate(45)"/><rect x="-2.3" y="-9" width="4.6" height="18" fill="#f2f2f2" transform="rotate(90)"/><rect x="-2.3" y="-9" width="4.6" height="18" fill="#f2f2f2" transform="rotate(135)"/><circle r="6.4799999999999995" fill="#f2f2f2"/><circle r="2.43" fill="#3a4150"/></svg>
<svg style="position:absolute;left:10px;top:1410px;overflow:visible" width="40" height="40" viewBox="-20 -20 40 40"><text x="0" y="14" font-family="Liberation Sans" font-size="40" fill="#dadada" text-anchor="middle" >A</text></svg>
<svg style="position:absolute;left:70px;top:1410px;overflow:visible" width="40" height="40" viewBox="-20 -20 40 40"><text x="-3" y="9" font-family="Liberation Sans" font-size="34" fill="#dadada" text-anchor="middle" >A</text><path d="M3 9 L14 -2 L16 0 L6 11 Z" fill="#f0f0f0"/><path d="M-2 16 C0 10 4 8 6 11 C5 15 1 16 -2 16Z" fill="#c9a37a"/></svg>
<svg style="position:absolute;left:130px;top:1410px;overflow:visible" width="40" height="40" viewBox="-20 -20 40 40"><text x="0" y="12" font-family="Liberation Sans" font-size="40" fill="#dadada" text-anchor="middle" >A</text><path d="M-15 16 H15" stroke="#90c3f2" stroke-width="2.4"/></svg>
<svg style="position:absolute;left:10px;top:1474px;overflow:visible" width="40" height="40" viewBox="-20 -20 40 40"><rect x="-16" y="-14" width="20" height="20" fill="#dadada"/><path d="M-13 -9 H1 M-13 -5 H1 M-13 -1 H1" stroke="#6d7381" stroke-width="1.6"/><text x="3" y="16" font-family="Liberation Sans" font-size="26" fill="#f0f0f0" text-anchor="middle" >A</text><path d="M13 -14 V-6 M10 -9 L13 -5 L16 -9" stroke="#f0f0f0" stroke-width="2" fill="none"/></svg>
<svg style="position:absolute;left:70px;top:1474px;overflow:visible" width="40" height="40" viewBox="-20 -20 40 40"><text x="0" y="-5" font-family="Liberation Sans" font-weight="bold" font-size="11.5" fill="#dadada" text-anchor="middle">ABC</text><path d="M-10 4 L-3 11 L10 -2" stroke="#64c878" stroke-width="3.4" fill="none"/></svg>
<svg style="position:absolute;left:130px;top:1474px;overflow:visible" width="40" height="40" viewBox="-20 -20 40 40"><circle cx="-3" cy="-3" r="12" fill="none" stroke="#f0f0f0" stroke-width="2.2"/><text x="-3" y="3" font-family="Liberation Sans" font-size="17" fill="#f0f0f0" text-anchor="middle" >A</text><path d="M6 6 L15 15" stroke="#c9a37a" stroke-width="3.6"/></svg>
<svg style="position:absolute;left:10px;top:1538px;overflow:visible" width="40" height="40" viewBox="-20 -20 40 40"><rect x="-16" y="-15" width="14" height="16" fill="#f0f0f0"/><path d="M-13 -11 H-12 M-10 -11 H-5 M-13 -7 H-12 M-10 -7 H-5 M-13 -3 H-12 M-10 -3 H-5" stroke="#90c3f2" stroke-width="1.6"/><path d="M-8 2 H16 V7 H-8Z" fill="#90c3f2"/><path d="M-8 8 H16 V15 H-8Z" fill="#dadada"/><text x="8" y="-1" font-family="Liberation Sans" font-weight="bold" font-size="15" fill="#90c3f2" text-anchor="middle">A</text></svg>
<svg style="position:absolute;left:70px;top:1538px;overflow:visible" width="40" height="40" viewBox="-20 -20 40 40"><path d="M-15 1 H9 V7 H-15Z" fill="#90c3f2"/><path d="M-15 8 H9 V15 H-15Z" fill="#dadada"/><text x="-7" y="-2" font-family="Liberation Sans" font-weight="bold" font-size="15" fill="#90c3f2" text-anchor="middle">A</text><path d="M2 -8 A6 6 0 0 1 13 -11 M14 -5 A6 6 0 0 1 3 -2" stroke="#64c878" stroke-width="2.4" fill="none"/></svg>
<svg style="position:absolute;left:130px;top:1538px;overflow:visible" width="40" height="40" viewBox="-20 -20 40 40"><text x="0" y="-8" font-family="Liberation Sans" font-weight="bold" font-size="9.5" fill="#dadada" text-anchor="middle">PDF</text><path d="M-9 -5 V3 H-2 M-5 0 L-2 3 L-5 6" stroke="#f0f0f0" stroke-width="2" fill="none"/><text x="8" y="15" font-family="Liberation Sans" font-size="21" fill="#90c3f2" text-anchor="middle">A</text></svg>
<svg style="position:absolute;left:10px;top:1602px;overflow:visible" width="40" height="40" viewBox="-20 -20 40 40"><text x="-6" y="-8" font-family="Liberation Sans" font-weight="bold" font-size="9.5" fill="#dadada" text-anchor="middle">PDF</text><path d="M-14 -5 V3 H-7 M-10 0 L-7 3 L-10 6" stroke="#f0f0f0" stroke-width="2" fill="none"/><text x="3" y="14" font-family="Liberation Sans" font-style="italic" font-size="20" fill="#dadada" text-anchor="middle">A</text><path d="M3 15 L13 3 M10 1 L16 4" stroke="#90c3f2" stroke-width="3"/></svg>
<div style="position:absolute;left:8px;top:1664px;width:164px;height:2px;background:#1f242d;"></div>
<svg style="position:absolute;left:8px;top:1686px;overflow:visible;" width="17" height="9" viewBox="0 0 17 9"><path d="M0 0 L17 0 L8.5 9 Z" fill="#f2f2f2"/></svg>
<div style="position:absolute;left:34.50px;top:1676.56px;font-size:21.80px;line-height:21.80px;color:#f2f2f2;white-space:nowrap;transform:scaleX(0.9127);transform-origin:0 0;-webkit-text-stroke:0.35px #f2f2f2;">Dimension</div>
<svg style="position:absolute;left:140px;top:1669px;overflow:visible" width="40" height="40" viewBox="-20 -20 40 40"><rect x="-2.3" y="-9" width="4.6" height="18" fill="#f2f2f2" transform="rotate(0)"/><rect x="-2.3" y="-9" width="4.6" height="18" fill="#f2f2f2" transform="rotate(45)"/><rect x="-2.3" y="-9" width="4.6" height="18" fill="#f2f2f2" transform="rotate(90)"/><rect x="-2.3" y="-9" width="4.6" height="18" fill="#f2f2f2" transform="rotate(135)"/><circle r="6.4799999999999995" fill="#f2f2f2"/><circle r="2.43" fill="#3a4150"/></svg>
<svg style="position:absolute;left:10px;top:1718px;overflow:visible" width="40" height="40" viewBox="-20 -20 40 40"><path d="M-15 -15 V15 M15 -15 V15 M-12 -10 H12" stroke="#dadada" stroke-width="2.2"/><path d="M-12 -10 L-8 -13 V-7Z M12 -10 L8 -13 V-7Z" fill="#dadada"/><path d="M0 0 V4 M-7 3 L-4 6 M7 3 L4 6 M-10 10 H-6 M6 10 H10" stroke="#e8b86a" stroke-width="2.2"/></svg>
<svg style="position:absolute;left:70px;top:1718px;overflow:visible" width="40" height="40" viewBox="-20 -20 40 40"><path d="M-15 2 V15 M15 2 V15 M-12 8 H12" stroke="#dadada" stroke-width="2.2"/><path d="M-12 8 L-8 5 V11Z M12 8 L8 5 V11Z" fill="#dadada"/><path d="M5 -6 L14 -15 L15 -13 L7 -4Z" fill="#f0f0f0"/><path d="M-4 5 C-3 -3 3 -5 6 -3 C5 3 -1 5 -4 5Z" fill="#c9a37a"/></svg>
<div style="position:absolute;left:128px;top:1716px;width:44px;height:44px;background:#323947;"></div>
<svg style="position:absolute;left:130px;top:1718px;overflow:visible" width="40" height="40" viewBox="-20 -20 40 40"><path d="M-15 -15 V15 M15 -15 V15" stroke="#dadada" stroke-width="2.4"/><path d="M-12 -6 H12" stroke="#90c3f2" stroke-width="2.2"/><path d="M-12 -6 L-7 -10 V-2Z M12 -6 L7 -10 V-2Z" fill="#90c3f2"/></svg>
<svg style="position:absolute;left:130px;top:1718px;overflow:visible" width="40" height="40" viewBox="-20 -20 40 40"><path d="M22 14 L22 22 L14 22 Z" fill="#9a9ea6"/></svg>
<div style="position:absolute;left:0;top:1775px;width:180px;height:17px;overflow:hidden">
<svg style="position:absolute;left:10px;top:0" width="160" height="17"><path d="M6 11 V17 M20 11 V17 M34 11 V17" stroke="#dadada" stroke-width="2"/><path d="M68 23 A12 12 0 0 1 92 23" stroke="#dadada" stroke-width="2.4" fill="none"/><path d="M123 15 H152" stroke="#dadada" stroke-width="2.4"/></svg>
</div>
<div style="position:absolute;left:0px;top:1792px;width:180px;height:48px;background:#3a4150;"></div>
<svg style="position:absolute;left:21px;top:1798px;overflow:visible" width="40" height="40" viewBox="-20 -20 40 40"><path d="M0 -11 V11 M-11 0 H11" stroke="#dadada" stroke-width="2.2"/></svg>
<svg style="position:absolute;left:81px;top:1798px;overflow:visible" width="40" height="40" viewBox="-20 -20 40 40"><path d="M-13 -9 H13 M-13 -3 H13 M-13 3 H6 M-13 9 H13" stroke="#dadada" stroke-width="2.2"/><path d="M9 5 L13 1 L17 5Z" fill="#dadada"/></svg>
<svg style="position:absolute;left:208px;top:145px;overflow:visible;" width="18" height="18" viewBox="0 0 18 18"><path d="M9 2 V16 M2 9 H16" stroke="#9fa3a9" stroke-width="1.6"/></svg>
<div style="position:absolute;left:248px;top:139px;width:4px;height:25px;background:#a0a4aa;"></div>
<div style="position:absolute;left:263.00px;top:139.83px;font-size:23.84px;line-height:23.84px;color:#a5a9af;white-space:nowrap;font-weight:bold;transform:scaleX(0.9917);transform-origin:0 0;">Custom View</div>
<div style="position:absolute;left:424px;top:139px;width:4px;height:25px;background:#a0a4aa;"></div>
<div style="position:absolute;left:439.00px;top:139.83px;font-size:23.84px;line-height:23.84px;color:#a5a9af;white-space:nowrap;font-weight:bold;transform:scaleX(1.0361);transform-origin:0 0;">X-Ray</div>
<svg style="position:absolute;left:0;top:0" width="2938" height="1840" viewBox="0 0 2938 1840"><polygon points="1224.5,302.7 1896.5,404.4 1896.5,1167.6 1483.5,1333.0 811.5,1231.7 811.5,468.0" fill="#6b1614" shape-rendering="crispEdges"/><polygon points="811.5,468.0 1224.5,302.7 1896.5,404.4 1483.5,569.0" fill="#6f1715" shape-rendering="crispEdges"/><polygon points="811.5,1231.7 1224.5,1066.4 1896.5,1167.6 1483.5,1333.0" fill="#6f1715" shape-rendering="crispEdges"/><polygon points="1224.5,530.1 1483.5,569.0 1483.5,1105.4 1224.5,1066.4" fill="#751816" shape-rendering="crispEdges"/><path d="M1224.5 302.7 L1224.5 1066.4 M811.5 1231.7 L1224.5 1066.4 L1896.5 1167.6" stroke="#d98884" stroke-width="1.1" fill="none" shape-rendering="crispEdges"/><path d="M811.5 468 L1483.5 569 L1896.5 404.4 M1483.5 569 L1483.5 1333" stroke="#f6eeee" stroke-width="1.1" fill="none" shape-rendering="crispEdges"/><polygon points="1224.5,302.7 1896.5,404.4 1896.5,1167.6 1483.5,1333.0 811.5,1231.7 811.5,468.0" fill="none" stroke="#f8f4f4" stroke-width="1.2" shape-rendering="crispEdges"/></svg>
<svg style="position:absolute;left:0;top:0" width="2938" height="1840" viewBox="0 0 2938 1840">
<defs>
<linearGradient id="gy" x1="0" y1="0" x2="1" y2="0"><stop offset="0" stop-color="#3f7a3a"/><stop offset="0.55" stop-color="#6fb064"/><stop offset="0.8" stop-color="#9fd58f"/><stop offset="1" stop-color="#4f8a48"/></linearGradient>
<linearGradient id="gz" x1="0" y1="0" x2="0" y2="1"><stop offset="0" stop-color="#4f7fc0"/><stop offset="0.45" stop-color="#a8ccf4"/><stop offset="1" stop-color="#3b64a0"/></linearGradient>
<linearGradient id="gx" x1="0" y1="0" x2="0" y2="1"><stop offset="0" stop-color="#b77a72"/><stop offset="0.5" stop-color="#9a5a55"/><stop offset="1" stop-color="#6e3c3a"/></linearGradient>
</defs>
<g transform="translate(1440.5,1325) rotate(7.3)"><rect x="-42" y="-6" width="80" height="12" rx="6" fill="url(#gz)"/></g>
<rect x="1477.5" y="1240" width="12" height="92" fill="url(#gy)"/>
<path d="M1477.5 1240 L1483.5 1234 L1489.5 1240 Z" fill="#74b26a"/>
<g transform="translate(1459.8,1342) rotate(-20.5)"><rect x="-31" y="-6.5" width="62" height="13" rx="6.5" fill="url(#gx)"/><circle cx="-25" cy="0" r="5" fill="#c98a80"/></g>
<path d="M1480 1210 L1492 1222 L1504 1210 M1492 1222 V1234" stroke="#8a9a3a" stroke-width="1.3" fill="none"/>
<path d="M1393 1289 H1418 L1393 1313 H1417" stroke="#5656c8" stroke-width="1.4" fill="none"/>
<path d="M1427 1323 L1451 1346 M1451 1323 L1427 1346" stroke="#d05050" stroke-width="1.1"/>
</svg>
<svg style="position:absolute;left:0;top:0" width="2938" height="1840" viewBox="0 0 2938 1840">
<line x1="2073.3" y1="1254" x2="2073.3" y2="1351" stroke="#b8eaa6" stroke-width="1.3"/>
<line x1="2073.3" y1="1364" x2="2073.3" y2="1410" stroke="#b8eaa6" stroke-width="1.3"/>
<line x1="1982" y1="1346.3" x2="2067" y2="1357" stroke="#5b5bbd" stroke-width="1.4"/>
<line x1="2080" y1="1358.5" x2="2120" y2="1363.6" stroke="#5b5bbd" stroke-width="1.4"/>
<line x1="2018" y1="1379.5" x2="2067" y2="1361" stroke="#d07a74" stroke-width="1.3"/>
<line x1="2080" y1="1355" x2="2102" y2="1348" stroke="#d07a74" stroke-width="1.3"/>
<rect x="2068" y="1351.8" width="11.5" height="11.5" fill="none" stroke="#ffffff" stroke-width="1.5"/>
</svg>
<svg style="position:absolute;left:0;top:0" width="2938" height="1840" viewBox="0 0 2938 1840">
<defs>
<linearGradient id="vl" x1="0" y1="0" x2="1" y2="0"><stop offset="0" stop-color="#a9abad"/><stop offset="0.5" stop-color="#c4c6c8"/><stop offset="1" stop-color="#b4b6b9"/></linearGradient>
</defs>
<path fill-rule="evenodd" d="M2172 354 A134 40.5 0 1 0 2440 354 A134 40.5 0 1 0 2172 354 Z M2208.4 356 A98.5 26 0 1 0 2405.4 356 A98.5 26 0 1 0 2208.4 356 Z" fill="#4b5059"/>
<polygon points="2237,245 2324,255 2324,357 2239.6,340.5" fill="url(#vl)"/>
<polygon points="2324,255 2371.5,240 2369.8,327 2324,357" fill="#a6a8ab"/>
<polygon points="2237,245 2293.5,231.8 2371.5,240 2324,255" fill="#b3b5b8"/>
<line x1="2324" y1="255" x2="2324" y2="357" stroke="#8d9094" stroke-width="1"/>
<rect x="2307" y="274" width="26" height="62" fill="#a2a6ab" opacity="0.6"/>
<text transform="translate(2286,331) rotate(-86) scale(1,0.95)" font-family="Liberation Sans" font-weight="bold" font-size="23" fill="#52565d" textLength="64" lengthAdjust="spacingAndGlyphs">RIGHT</text>
<text transform="translate(2327,323) skewY(-22)" font-family="Liberation Sans" font-weight="bold" font-size="25" fill="#5a5e65" textLength="44" lengthAdjust="spacingAndGlyphs">BOTTOM</text>
<text transform="translate(2325,236) rotate(188)" font-family="Liberation Sans" font-weight="bold" font-size="10" fill="#74787e" textLength="30" lengthAdjust="spacingAndGlyphs">LEFT</text>
<g transform="translate(2212,325) rotate(-18) scale(2.0,0.62)"><text x="0" y="0" transform="rotate(-70)" font-family="Liberation Sans" font-weight="bold" font-size="28" fill="#c5c7ca" stroke="#c5c7ca" stroke-width="2" text-anchor="middle" dominant-baseline="central">N</text></g>
<g transform="translate(2229,381) rotate(-14) scale(1.75,0.6)"><text x="0" y="0" font-family="Liberation Sans" font-weight="bold" font-size="34" fill="#c5c7ca" stroke="#c5c7ca" stroke-width="1.5" text-anchor="middle" dominant-baseline="central">W</text></g>
<g transform="translate(2418,366) rotate(16) scale(2.6,0.5)"><text x="0" y="0" font-family="Liberation Sans" font-weight="bold" font-size="28" fill="#c5c7ca" stroke="#c5c7ca" stroke-width="2" text-anchor="middle" dominant-baseline="central">S</text></g>
<path d="M2376 318 L2380 311" stroke="#c7c9cc" stroke-width="2"/>
</svg>
<div style="position:absolute;left:2234px;top:467.6px;width:142.6px;height:23.4px;background:#7c838e;border-radius:9px;"></div>
<div style="position:absolute;left:2243.00px;top:470.01px;font-size:18.90px;line-height:18.90px;color:#262a31;white-space:nowrap;transform:scaleX(1.0986);transform-origin:0 0;-webkit-text-stroke:0.4px #262a31;">Unnamed</div>
<svg style="position:absolute;left:2350px;top:475px;overflow:visible;" width="18" height="10" viewBox="0 0 18 10"><path d="M2 1.5 H16 L9 9 Z" fill="none" stroke="#2b3038" stroke-width="1.6"/></svg>
<div style="position:absolute;left:824px;top:1742px;width:1000px;height:50px;background:#3b4454;"></div>
<svg style="position:absolute;left:840px;top:1756px;overflow:visible;" width="14" height="14" viewBox="0 0 14 14"><path d="M2 1.5 L11 6 L2 10.5" fill="none" stroke="#c9ccd1" stroke-width="1.8"/></svg>
<div style="position:absolute;left:857px;top:1772px;width:12px;height:2px;background:#c9ccd1;"></div>
<svg style="position:absolute;left:873px;top:1761px;overflow:visible;" width="11" height="7" viewBox="0 0 11 7"><path d="M0 0 H10 L5 6 Z" fill="#c9ccd1"/></svg>
<div style="position:absolute;left:914.00px;top:1756.44px;font-size:22.53px;line-height:22.53px;color:#9aa0a8;white-space:nowrap;font-style:italic;transform:scaleX(1.0153);transform-origin:0 0;-webkit-text-stroke:0.25px #9aa0a8;">Type a command</div>
<svg style="position:absolute;left:1740px;top:1761px;overflow:visible;" width="16" height="10" viewBox="0 0 16 10"><path d="M1 9 H15 L8 1 Z" fill="#a7acb3"/></svg>
<svg style="position:absolute;left:1777px;top:1752px;overflow:visible;" width="28" height="30" viewBox="0 0 28 30"><path d="M3 10 V26 H25 V10 M11 10 V26 M14 20 V3 M9 8 L14 3 L19 8" fill="none" stroke="#d4d6da" stroke-width="2"/><path d="M14 18 V2 M10 6 L14 2 L18 6" fill="none" stroke="#90c3f2" stroke-width="2"/></svg>
<div style="position:absolute;left:2468px;top:82px;width:104px;height:46px;background:#3a4252;"></div>
<div style="position:absolute;left:2572px;top:82px;width:2px;height:44px;background:#1e232b;"></div>
<div style="position:absolute;left:2574px;top:82px;width:102px;height:44px;background:#2e3440;"></div>
<div style="position:absolute;left:2676px;top:82px;width:2px;height:44px;background:#1e232b;"></div>
<div style="position:absolute;left:2678px;top:82px;width:102px;height:44px;background:#2e3440;"></div>
<div style="position:absolute;left:2780px;top:82px;width:2px;height:44px;background:#1e232b;"></div>
<div style="position:absolute;left:2782px;top:82px;width:108px;height:44px;background:#2e3440;"></div>
<div style="position:absolute;left:2890px;top:82px;width:2px;height:44px;background:#1e232b;"></div>
<div style="position:absolute;left:2892px;top:82px;width:46px;height:44px;background:#3a4252;"></div>
<div style="position:absolute;left:2574px;top:126px;width:364px;height:2px;background:#1e232b;"></div>
<svg style="position:absolute;left:2502px;top:90px;overflow:visible;" width="40" height="36" viewBox="0 0 40 36"><path d="M10 2 H30 L24 8 H4 Z M10 11 H30 L24 17 H4 Z M10 20 H30 L24 26 H4 Z" fill="#d6d6d6"/><circle cx="30" cy="26" r="8.5" fill="#d6d6d6" stroke="#3a4252" stroke-width="2"/><path d="M30 23.5 V31" stroke="#3a4252" stroke-width="2.6"/><circle cx="30" cy="20.5" r="1.5" fill="#3a4252"/></svg>
<svg style="position:absolute;left:2605px;top:86px;overflow:visible;" width="40" height="34" viewBox="0 0 40 34"><path d="M6 11 H30 L37 18 V30 H6 Z" fill="#d6d6d6"/><path d="M30 11 V18 H37" fill="#f2f2f2" stroke="#2e3440" stroke-width="1"/><rect x="5" y="1" width="11" height="19" rx="5.5" fill="#2e3440"/><path d="M8 13 V6 A3 3 0 0 1 14 6 V14 A2 2 0 0 1 10 14 V7" fill="none" stroke="#d6d6d6" stroke-width="2"/></svg>
<svg style="position:absolute;left:2716px;top:92px;overflow:visible;" width="30" height="28" viewBox="0 0 30 28"><rect x="1" y="2" width="27" height="25" fill="#d6d6d6"/><rect x="4" y="9" width="6" height="5" fill="#2e3440"/><rect x="12" y="9" width="6" height="5" fill="#2e3440"/><rect x="20" y="9" width="6" height="5" fill="#2e3440"/><rect x="4" y="17" width="6" height="5" fill="#2e3440"/><rect x="12" y="17" width="6" height="5" fill="#2e3440"/><rect x="20" y="17" width="6" height="5" fill="#2e3440"/><path d="M3 4 H7" stroke="#2e3440" stroke-width="1.2"/></svg>
<svg style="position:absolute;left:2735px;top:80px;overflow:visible;" width="20" height="20" viewBox="0 0 20 20"><circle cx="10" cy="10" r="9.5" fill="#e07840" stroke="#f2f2f2" stroke-width="1"/></svg>
<svg style="position:absolute;left:2908px;top:97px;overflow:visible;" width="18" height="14" viewBox="0 0 18 14"><path d="M2 2 L7 7 L2 12 M9 2 L14 7 L9 12" fill="none" stroke="#9ba0a8" stroke-width="1.8"/></svg>
<div style="position:absolute;left:2489.00px;top:131.55px;font-size:25.00px;line-height:25.00px;color:#f2f2f2;white-space:nowrap;transform:scaleX(0.9729);transform-origin:0 0;-webkit-text-stroke:0.3px #f2f2f2;">Layers</div>
<svg style="position:absolute;left:2895px;top:128px;overflow:visible;" width="26" height="30" viewBox="0 0 26 30"><path d="M9 8 V2 H23 V28 H9 V21" fill="none" stroke="#d6d6d6" stroke-width="2.2"/><path d="M2 14.5 H14 M2 14.5 L7 9.5 M2 14.5 L7 19.5" fill="none" stroke="#d6d6d6" stroke-width="2.2"/></svg>
<svg style="position:absolute;left:2494px;top:191px;overflow:visible;" width="36" height="36" viewBox="0 0 36 36"><path d="M10 12 H34 L26 19 H2 Z" fill="#90c3f2"/><path d="M10 21 H34 L26 27 H2 Z M10 29 H34 L26 35 H2 Z" fill="#d6d6d6" stroke="#3a4252" stroke-width="1"/><circle cx="16" cy="8" r="6.5" fill="#d6d6d6"/></svg>
<svg style="position:absolute;left:2542px;top:191px;overflow:visible;" width="36" height="36" viewBox="0 0 36 36"><path d="M9 3 H29 L22 10 H2 Z M9 12 H29 L22 19 H2 Z M9 21 H29 L22 28 H2 Z" fill="#d6d6d6"/><path d="M18 30 L27 21 L33 27 L24 35 Z" fill="#f0c874"/><path d="M27 21 L31 17 L36 22 L33 27Z" fill="#d6d6d6"/></svg>
<svg style="position:absolute;left:2592px;top:191px;overflow:visible;" width="36" height="36" viewBox="0 0 36 36"><path d="M11 12 H31 L24 19 H4 Z M11 21 H31 L24 28 H4 Z M11 30 H29 L24 35 H4 Z" fill="#d6d6d6"/><path d="M4 6 A9 7 0 0 1 22 9 L22 13" fill="none" stroke="#90c3f2" stroke-width="3"/><path d="M0 6 L7 0 L8 10 Z" fill="#90c3f2"/></svg>
<svg style="position:absolute;left:2640px;top:191px;overflow:visible;" width="36" height="36" viewBox="0 0 36 36"><path d="M9 3 H29 L22 10 H2 Z M9 12 H29 L22 19 H2 Z" fill="#d6d6d6"/><path d="M9 21 H29 L22 28 H2 Z" fill="#90c3f2"/><path d="M30 18 L17 31 M17 24 V31 H24" fill="none" stroke="#f4f4f4" stroke-width="2.6"/></svg>
<svg style="position:absolute;left:2688px;top:191px;overflow:visible;" width="36" height="36" viewBox="0 0 36 36"><path d="M9 3 H29 L22 10 H2 Z M9 12 H29 L22 19 H2 Z" fill="#d6d6d6"/><path d="M9 21 H29 L22 28 H2 Z" fill="#90c3f2"/><path d="M17 33 L31 19 M24 19 H31 V26" fill="none" stroke="#f4f4f4" stroke-width="2.6"/></svg>
<svg style="position:absolute;left:2734px;top:191px;overflow:visible;" width="36" height="36" viewBox="0 0 36 36"><path d="M10 3 H32 L24 12 H2 Z" fill="#d6d6d6"/><g stroke="#6fd0dc" stroke-width="2" fill="none" stroke-linecap="round"><path d="M22 24 L22.00 15.00"/><path d="M22.00 18.42 L24.20 15.80"/><path d="M22.00 18.42 L19.80 15.80"/><path d="M22 24 L14.21 19.50"/><path d="M17.17 21.21 L16.00 18.00"/><path d="M17.17 21.21 L13.80 21.80"/><path d="M22 24 L14.21 28.50"/><path d="M17.17 26.79 L13.80 26.20"/><path d="M17.17 26.79 L16.00 30.00"/><path d="M22 24 L22.00 33.00"/><path d="M22.00 29.58 L19.80 32.20"/><path d="M22.00 29.58 L24.20 32.20"/><path d="M22 24 L29.79 28.50"/><path d="M26.83 26.79 L28.00 30.00"/><path d="M26.83 26.79 L30.20 26.20"/><path d="M22 24 L29.79 19.50"/><path d="M26.83 21.21 L30.20 21.80"/><path d="M26.83 21.21 L28.00 18.00"/></g></svg>
<svg style="position:absolute;left:2782px;top:191px;overflow:visible;" width="36" height="36" viewBox="0 0 36 36"><path d="M10 3 H32 L24 12 H2 Z" fill="#d6d6d6"/><circle cx="23" cy="20" r="6.5" fill="#6fd0dc"/><rect x="20" y="26" width="6" height="6" rx="2" fill="#f4f4f4"/></svg>
<svg style="position:absolute;left:2830px;top:191px;overflow:visible;" width="36" height="36" viewBox="0 0 36 36"><path d="M10 3 H32 L24 12 H2 Z" fill="#d6d6d6"/><path d="M17 22 V17 A6 6 0 0 1 29 17 V22" fill="none" stroke="#6fd0dc" stroke-width="2.6"/><rect x="15" y="21" width="16" height="12" fill="#6fd0dc"/><rect x="22" y="25" width="2" height="5" fill="#3a4252"/></svg>
<svg style="position:absolute;left:2878px;top:191px;overflow:visible;" width="36" height="36" viewBox="0 0 36 36"><path d="M10 3 H32 L24 12 H2 Z" fill="#d6d6d6"/><path d="M24 22 V16 A6 6 0 0 1 36 16" fill="none" stroke="#f0c874" stroke-width="2.6"/><rect x="12" y="21" width="16" height="12" fill="#f0c874"/><rect x="19" y="25" width="2" height="5" fill="#3a4252"/></svg>
<div style="position:absolute;left:2488px;top:248px;width:436px;height:50px;background:#4f596e;border-radius:5px;border:1.5px solid #2c323d;"></div>
<svg style="position:absolute;left:2506px;top:263px;overflow:visible;" width="20" height="20" viewBox="0 0 20 20"><circle cx="10" cy="10" r="8" fill="#e2e2e2"/></svg>
<svg style="position:absolute;left:2542px;top:262px;overflow:visible;" width="20" height="22" viewBox="0 0 20 22"><path d="M5 10 V7 A5 5 0 0 1 15 7 V10" fill="none" stroke="#646c7c" stroke-width="2"/><rect x="3" y="10" width="14" height="11" fill="#646c7c"/></svg>
<svg style="position:absolute;left:2574px;top:262px;overflow:visible;" width="22" height="22" viewBox="0 0 22 22"><g stroke="#646c7c" stroke-width="2" fill="none" stroke-linecap="round"><path d="M11 11 L11.00 3.00"/><path d="M11.00 6.04 L12.95 3.71"/><path d="M11.00 6.04 L9.05 3.71"/><path d="M11 11 L4.07 7.00"/><path d="M6.70 8.52 L5.66 5.66"/><path d="M6.70 8.52 L3.71 9.05"/><path d="M11 11 L4.07 15.00"/><path d="M6.70 13.48 L3.71 12.95"/><path d="M6.70 13.48 L5.66 16.34"/><path d="M11 11 L11.00 19.00"/><path d="M11.00 15.96 L9.05 18.29"/><path d="M11.00 15.96 L12.95 18.29"/><path d="M11 11 L17.93 15.00"/><path d="M15.30 13.48 L16.34 16.34"/><path d="M15.30 13.48 L18.29 12.95"/><path d="M11 11 L17.93 7.00"/><path d="M15.30 8.52 L18.29 9.05"/><path d="M15.30 8.52 L16.34 5.66"/></g></svg>
<div style="position:absolute;left:2608px;top:264px;width:18px;height:18px;background:#e8412c;border:2px solid #101010;"></div>
<div style="position:absolute;left:2650.00px;top:262.28px;font-size:23.55px;line-height:23.55px;color:#f2f2f2;white-space:nowrap;transform:scaleX(0.9594);transform-origin:0 0;-webkit-text-stroke:0.25px #f2f2f2;">Cubo</div>
<svg style="position:absolute;left:2901px;top:266px;overflow:visible;" width="18" height="12" viewBox="0 0 18 12"><path d="M1 1 H17 L9 10 Z" fill="#d8dadd"/></svg>
<div style="position:absolute;left:2490px;top:304px;width:432px;height:50px;background:#4f596e;border-radius:5px;border:1.5px solid #2c323d;"></div>
<div style="position:absolute;left:2503.00px;top:317.28px;font-size:23.55px;line-height:23.55px;color:#f2f2f2;white-space:nowrap;transform:scaleX(0.9732);transform-origin:0 0;-webkit-text-stroke:0.2px #f2f2f2;">Unsaved Layer State</div>
<svg style="position:absolute;left:2899px;top:322px;overflow:visible;" width="18" height="12" viewBox="0 0 18 12"><path d="M1 1 H17 L9 10 Z" fill="#d8dadd"/></svg>
<svg style="position:absolute;left:2495px;top:373px;overflow:visible;" width="20" height="14" viewBox="0 0 20 14"><path d="M2 2 L10 10 L18 2" fill="none" stroke="#c4c7cc" stroke-width="2.4"/></svg>
<div style="position:absolute;left:2537.00px;top:368.28px;font-size:23.55px;line-height:23.55px;color:#c9ccd2;white-space:nowrap;transform:scaleX(0.9806);transform-origin:0 0;-webkit-text-stroke:0.25px #c9ccd2;">Hide Layer List</div>
<div style="position:absolute;left:2490px;top:412px;width:428px;height:764px;background:#4d576b;"></div>
<div style="position:absolute;left:2490px;top:412px;width:428px;height:47px;background:#2d333f;"></div>
<div style="position:absolute;left:2554px;top:412px;width:114px;height:47px;background:#4d576b;"></div>
<div style="position:absolute;left:2553px;top:412px;width:1px;height:47px;background:#262b35;"></div>
<div style="position:absolute;left:2668px;top:412px;width:1px;height:47px;background:#262b35;"></div>
<div style="position:absolute;left:2712px;top:412px;width:1px;height:47px;background:#262b35;"></div>
<div style="position:absolute;left:2757px;top:412px;width:1px;height:47px;background:#262b35;"></div>
<div style="position:absolute;left:2850px;top:412px;width:1px;height:47px;background:#262b35;"></div>
<svg style="position:absolute;left:2505px;top:426px;overflow:visible;" width="30" height="20" viewBox="0 0 30 20"><path d="M2 10 Q15 -2 28 10 Q15 22 2 10 Z" fill="#e0e0e0"/><circle cx="15" cy="10" r="5" fill="#2d333f"/><circle cx="15" cy="10" r="2.5" fill="#e0e0e0"/></svg>
<svg style="position:absolute;left:2561px;top:427px;overflow:visible;" width="18" height="18" viewBox="0 0 18 18"><rect x="1" y="1" width="15" height="15" fill="none" stroke="#d0d0d0" stroke-width="2"/><path d="M1 16 L16 1 V16 Z" fill="#d0d0d0"/></svg>
<div style="position:absolute;left:2593.00px;top:424.44px;font-size:22.53px;line-height:22.53px;color:#e8e8e8;white-space:nowrap;font-weight:bold;transform:scaleX(1.1413);transform-origin:0 0;">N...</div>
<svg style="position:absolute;left:2641px;top:426px;overflow:visible;" width="16" height="20" viewBox="0 0 16 20"><path d="M2 8 L8 1 L14 8 Z M2 12 L8 19 L14 12 Z" fill="#d0d0d0"/></svg>
<svg style="position:absolute;left:2601px;top:449px;overflow:visible;" width="18" height="10" viewBox="0 0 18 10"><path d="M1 10 L9 1 L17 10 Z" fill="#4f93e6"/></svg>
<svg style="position:absolute;left:2679px;top:425px;overflow:visible;" width="22" height="22" viewBox="0 0 22 22"><g stroke="#d8d8d8" stroke-width="2" fill="none" stroke-linecap="round"><path d="M11 11 L11.00 3.00"/><path d="M11.00 6.04 L12.95 3.71"/><path d="M11.00 6.04 L9.05 3.71"/><path d="M11 11 L4.07 7.00"/><path d="M6.70 8.52 L5.66 5.66"/><path d="M6.70 8.52 L3.71 9.05"/><path d="M11 11 L4.07 15.00"/><path d="M6.70 13.48 L3.71 12.95"/><path d="M6.70 13.48 L5.66 16.34"/><path d="M11 11 L11.00 19.00"/><path d="M11.00 15.96 L9.05 18.29"/><path d="M11.00 15.96 L12.95 18.29"/><path d="M11 11 L17.93 15.00"/><path d="M15.30 13.48 L16.34 16.34"/><path d="M15.30 13.48 L18.29 12.95"/><path d="M11 11 L17.93 7.00"/><path d="M15.30 8.52 L18.29 9.05"/><path d="M15.30 8.52 L16.34 5.66"/></g></svg>
<svg style="position:absolute;left:2724px;top:423px;overflow:visible;" width="20" height="24" viewBox="0 0 20 24"><path d="M5 11 V7 A5 5 0 0 1 15 7 V11" fill="none" stroke="#dcdcdc" stroke-width="2.4"/><rect x="3" y="11" width="14" height="12" fill="#dcdcdc"/><rect x="9" y="15" width="2" height="5" fill="#2d333f"/></svg>
<svg style="position:absolute;left:2790px;top:428px;overflow:visible;" width="24" height="16" viewBox="0 0 24 16"><path d="M2 3 H22 M2 8 H22 M2 13 H22" stroke="#dcdcdc" stroke-width="2.4"/></svg>
<svg style="position:absolute;left:2884px;top:428px;overflow:visible;" width="24" height="16" viewBox="0 0 24 16"><path d="M2 3 H22 M2 8 H22 M2 13 H22" stroke="#dcdcdc" stroke-width="2.2" stroke-dasharray="3 2"/></svg>
<div style="position:absolute;left:2490px;top:459px;width:428px;height:1px;background:#262b35;"></div>
<svg style="position:absolute;left:2518px;top:471px;overflow:visible;" width="16" height="16" viewBox="0 0 16 16"><circle cx="8" cy="8" r="8" fill="#dcdcdc"/></svg>
<div style="position:absolute;left:2552px;top:470px;width:18px;height:18px;background:#ffffff;border:2px solid #0c0c0c;"></div>
<div style="position:absolute;left:2588.60px;top:466.76px;font-size:23.69px;line-height:23.69px;color:#f6f6f6;white-space:nowrap;transform:scaleX(0.9867);transform-origin:0 0;-webkit-text-stroke:0.25px #f6f6f6;">0</div>
<div style="position:absolute;left:2770.50px;top:466.76px;font-size:23.69px;line-height:23.69px;color:#f6f6f6;white-space:nowrap;transform:scaleX(0.8995);transform-origin:0 0;-webkit-text-stroke:0.25px #f6f6f6;">De...</div>
<div style="position:absolute;left:2865px;top:477.5px;width:53px;height:3px;background:#f4f4f4;"></div>
<div style="position:absolute;left:2492px;top:498px;width:426px;height:38px;background:#8f9bb0;"></div>
<svg style="position:absolute;left:2518px;top:509px;overflow:visible;" width="16" height="16" viewBox="0 0 16 16"><circle cx="8" cy="8" r="8" fill="#dcdcdc"/></svg>
<div style="position:absolute;left:2552px;top:508px;width:18px;height:18px;background:#e8412c;border:2px solid #0c0c0c;"></div>
<div style="position:absolute;left:2588.60px;top:504.76px;font-size:23.69px;line-height:23.69px;color:#f6f6f6;white-space:nowrap;transform:scaleX(0.9535);transform-origin:0 0;-webkit-text-stroke:0.25px #f6f6f6;">Cubo</div>
<div style="position:absolute;left:2770.50px;top:504.76px;font-size:23.69px;line-height:23.69px;color:#f6f6f6;white-space:nowrap;transform:scaleX(0.8995);transform-origin:0 0;-webkit-text-stroke:0.25px #f6f6f6;">De...</div>
<div style="position:absolute;left:2865px;top:515.5px;width:53px;height:3px;background:#f4f4f4;"></div>
<svg style="position:absolute;left:2518px;top:547px;overflow:visible;" width="16" height="16" viewBox="0 0 16 16"><circle cx="8" cy="8" r="8" fill="#dcdcdc"/></svg>
<div style="position:absolute;left:2552px;top:546px;width:18px;height:18px;background:#6ef0ff;border:2px solid #0c0c0c;"></div>
<div style="position:absolute;left:2588.60px;top:542.76px;font-size:23.69px;line-height:23.69px;color:#f6f6f6;white-space:nowrap;transform:scaleX(0.9521);transform-origin:0 0;-webkit-text-stroke:0.25px #f6f6f6;">Dodec...</div>
<div style="position:absolute;left:2770.50px;top:542.76px;font-size:23.69px;line-height:23.69px;color:#f6f6f6;white-space:nowrap;transform:scaleX(0.8995);transform-origin:0 0;-webkit-text-stroke:0.25px #f6f6f6;">De...</div>
<div style="position:absolute;left:2865px;top:553.5px;width:53px;height:3px;background:#f4f4f4;"></div>
<svg style="position:absolute;left:2518px;top:585px;overflow:visible;" width="16" height="16" viewBox="0 0 16 16"><circle cx="8" cy="8" r="8" fill="#dcdcdc"/></svg>
<div style="position:absolute;left:2552px;top:584px;width:18px;height:18px;background:#1f3ef0;border:2px solid #0c0c0c;"></div>
<div style="position:absolute;left:2588.60px;top:580.76px;font-size:23.69px;line-height:23.69px;color:#f6f6f6;white-space:nowrap;transform:scaleX(0.9297);transform-origin:0 0;-webkit-text-stroke:0.25px #f6f6f6;">Icosa...</div>
<div style="position:absolute;left:2770.50px;top:580.76px;font-size:23.69px;line-height:23.69px;color:#f6f6f6;white-space:nowrap;transform:scaleX(0.8995);transform-origin:0 0;-webkit-text-stroke:0.25px #f6f6f6;">De...</div>
<div style="position:absolute;left:2865px;top:591.5px;width:53px;height:3px;background:#f4f4f4;"></div>
<svg style="position:absolute;left:2518px;top:623px;overflow:visible;" width="16" height="16" viewBox="0 0 16 16"><circle cx="8" cy="8" r="8" fill="#dcdcdc"/></svg>
<div style="position:absolute;left:2552px;top:622px;width:18px;height:18px;background:#5ee84a;border:2px solid #0c0c0c;"></div>
<div style="position:absolute;left:2588.60px;top:618.76px;font-size:23.69px;line-height:23.69px;color:#f6f6f6;white-space:nowrap;transform:scaleX(0.9524);transform-origin:0 0;-webkit-text-stroke:0.25px #f6f6f6;">Octae...</div>
<div style="position:absolute;left:2770.50px;top:618.76px;font-size:23.69px;line-height:23.69px;color:#f6f6f6;white-space:nowrap;transform:scaleX(0.8995);transform-origin:0 0;-webkit-text-stroke:0.25px #f6f6f6;">De...</div>
<div style="position:absolute;left:2865px;top:629.5px;width:53px;height:3px;background:#f4f4f4;"></div>
<svg style="position:absolute;left:2518px;top:661px;overflow:visible;" width="16" height="16" viewBox="0 0 16 16"><circle cx="8" cy="8" r="8" fill="#dcdcdc"/></svg>
<div style="position:absolute;left:2552px;top:660px;width:18px;height:18px;background:#fff354;border:2px solid #0c0c0c;"></div>
<div style="position:absolute;left:2588.60px;top:656.76px;font-size:23.69px;line-height:23.69px;color:#f6f6f6;white-space:nowrap;transform:scaleX(0.9581);transform-origin:0 0;-webkit-text-stroke:0.25px #f6f6f6;">Tetrae...</div>
<div style="position:absolute;left:2770.50px;top:656.76px;font-size:23.69px;line-height:23.69px;color:#f6f6f6;white-space:nowrap;transform:scaleX(0.8995);transform-origin:0 0;-webkit-text-stroke:0.25px #f6f6f6;">De...</div>
<div style="position:absolute;left:2865px;top:667.5px;width:53px;height:3px;background:#f4f4f4;"></div>
<div style="position:absolute;left:2489px;top:1176px;width:430px;height:33px;background:#363d4b;border:1px solid #30363f;"></div>
<div style="position:absolute;left:2496px;top:1190px;width:351px;height:10px;background:#8a909c;border-radius:5px;"></div>
<svg style="position:absolute;left:2502px;top:1218px;overflow:visible;" width="32" height="34" viewBox="0 0 32 34"><path d="M9 1 H27 L18 10 H1 Z" fill="none" stroke="#d6d6d6" stroke-width="2.2"/><path d="M3 16 H7 M26 7 L18 16 H2 L0 18 M26 14 L18 22 H4 M26 20 L18 27 H2" fill="none" stroke="#bdbdbd" stroke-width="2.2"/></svg>
<svg style="position:absolute;left:2561px;top:1218px;overflow:visible;" width="36" height="36" viewBox="0 0 36 36"><path d="M9 1 H27 L20 8 H2 Z" fill="none" stroke="#d6d6d6" stroke-width="2.2"/><path d="M2 14 H20 M2 20 H10" stroke="#b0b0b0" stroke-width="2.2"/><rect x="12" y="14" width="21" height="18" fill="#e4e4e4" stroke="#3a4252" stroke-width="1.5"/><path d="M16 21 H18 M20 21 H29 M16 26 H18 M20 26 H29" stroke="#3a4252" stroke-width="2"/></svg>
<svg style="position:absolute;left:2624px;top:1222px;overflow:visible;" width="30" height="24" viewBox="0 0 30 24"><path d="M1 2 H10 L13 5 H22 V9 H7 L1 23 Z" fill="#d6d6d6"/><path d="M8 10 H28 L22 23 H1 Z" fill="#d6d6d6"/></svg>
<svg style="position:absolute;left:2684px;top:1222px;overflow:visible;" width="30" height="24" viewBox="0 0 30 24"><path d="M1 2 H10 L13 5 H22 V9 H7 L1 23 Z" fill="#d6d6d6"/><path d="M8 10 H28 L22 23 H1 Z" fill="#d6d6d6"/><path d="M15 11 L10 18 H14 L12 23 L19 15 H15 L17 11 Z" fill="#3a4252"/></svg>
<div style="position:absolute;left:2821px;top:1232px;width:17px;height:4px;background:#6b7280;"></div>
<svg style="position:absolute;left:2870px;top:1222px;overflow:visible;" width="44" height="22" viewBox="0 0 44 22"><rect x="2" y="2" width="21" height="18" fill="none" stroke="#d6d6d6" stroke-width="2.2"/><path d="M9 2 V20 M16 2 V20" stroke="#d6d6d6" stroke-width="2.2"/><path d="M29 9 H39 L34 15 Z" fill="#d6d6d6"/></svg>
<div style="position:absolute;left:2490px;top:1260px;width:428px;height:40px;background:#ffffff;border-radius:10px;"></div>
<svg style="position:absolute;left:2497px;top:1268px;overflow:visible;" width="36" height="26" viewBox="0 0 36 26"><circle cx="10" cy="10" r="7.5" fill="none" stroke="#1a1a1a" stroke-width="2"/><path d="M15.5 15.5 L21 21" stroke="#1a1a1a" stroke-width="2.2"/><path d="M25 9 L29 13 L34 8" fill="none" stroke="#1a1a1a" stroke-width="1.8"/></svg>
<div style="position:absolute;left:2545.00px;top:1269.41px;font-size:25.87px;line-height:25.87px;color:#c2c2c2;white-space:nowrap;transform:scaleX(1.0405);transform-origin:0 0;-webkit-text-stroke:0.25px #c2c2c2;">Search for layer</div>
<div style="position:absolute;left:2468px;top:1318px;width:470px;height:2px;background:#1e232b;"></div>
<div style="position:absolute;left:2489.00px;top:1322.70px;font-size:24.71px;line-height:24.71px;color:#f2f2f2;white-space:nowrap;transform:scaleX(1.0301);transform-origin:0 0;-webkit-text-stroke:0.3px #f2f2f2;">Properties</div>
<div style="position:absolute;left:2708px;top:1321px;width:119px;height:28px;background:#2c313b;border-radius:4px;"></div>
<div style="position:absolute;left:2710px;top:1323px;width:55px;height:24px;background:#3d4350;border-radius:3px 0 0 3px;"></div>
<div style="position:absolute;left:2766px;top:1323px;width:59px;height:24px;background:#4e586d;border-radius:0 3px 3px 0;"></div>
<div style="position:absolute;left:2727.50px;top:1326.13px;font-size:18.17px;line-height:18.17px;color:#9ca1aa;white-space:nowrap;font-weight:bold;transform:scaleX(0.8184);transform-origin:0 0;">All</div>
<div style="position:absolute;left:2784.50px;top:1326.13px;font-size:18.17px;line-height:18.17px;color:#eeeeee;white-space:nowrap;font-weight:bold;transform:scaleX(0.9113);transform-origin:0 0;">My</div>
<svg style="position:absolute;left:2847px;top:1320px;overflow:visible;" width="32" height="32" viewBox="0 0 32 32"><path d="M2 2 H20 V11 M2 2 V25 H11" fill="none" stroke="#d6d6d6" stroke-width="2.2"/><path d="M6 8 H16 M6 13 H16 M6 18 H12" stroke="#d6d6d6" stroke-width="2"/><path d="M12 27 L24 13 L30 18 L18 31 L12 31 Z" fill="#d6d6d6"/></svg>
<svg style="position:absolute;left:2897px;top:1320px;overflow:visible;" width="26" height="32" viewBox="0 0 26 32"><path d="M9 8 V2 H23 V29 H9 V22" fill="none" stroke="#d6d6d6" stroke-width="2.2"/><path d="M2 15 H14 M2 15 L7 10 M2 15 L7 20" fill="none" stroke="#d6d6d6" stroke-width="2.2"/></svg>
<div style="position:absolute;left:2490px;top:1368px;width:428px;height:40px;background:#434b5d;border-radius:5px;"></div>
<div style="position:absolute;left:2502.70px;top:1376.33px;font-size:23.26px;line-height:23.26px;color:#8f96a3;white-space:nowrap;transform:scaleX(0.9946);transform-origin:0 0;-webkit-text-stroke:0.25px #8f96a3;">Model Space</div>
<svg style="position:absolute;left:2893px;top:1382px;overflow:visible;" width="18" height="12" viewBox="0 0 18 12"><path d="M1 1 H17 L9 10 Z" fill="#7d8490"/></svg>
<div style="position:absolute;left:2606.00px;top:1428.83px;font-size:23.26px;line-height:23.26px;color:#d8dbe0;white-space:nowrap;transform:scaleX(0.9897);transform-origin:0 0;-webkit-text-stroke:0.25px #d8dbe0;">Color</div>
<div style="position:absolute;left:2683px;top:1423px;width:212px;height:35px;background:#4c566b;border-radius:4px;border:1px solid #2f3542;"></div>
<svg style="position:absolute;left:2870px;top:1435px;overflow:visible;" width="18" height="12" viewBox="0 0 18 12"><path d="M1 1 H17 L9 10 Z" fill="#d8dadd"/></svg>
<div style="position:absolute;left:2700px;top:1432px;width:18px;height:18px;background:#e8412c;border:2px solid #101010;"></div>
<div style="position:absolute;left:2740.80px;top:1428.83px;font-size:23.26px;line-height:23.26px;color:#f2f2f2;white-space:nowrap;transform:scaleX(0.9729);transform-origin:0 0;-webkit-text-stroke:0.25px #f2f2f2;">ByLayer</div>
<div style="position:absolute;left:2605.00px;top:1474.83px;font-size:23.26px;line-height:23.26px;color:#d8dbe0;white-space:nowrap;transform:scaleX(0.9627);transform-origin:0 0;-webkit-text-stroke:0.25px #d8dbe0;">Layer</div>
<div style="position:absolute;left:2683px;top:1469px;width:212px;height:35px;background:#4c566b;border-radius:4px;border:1px solid #2f3542;"></div>
<svg style="position:absolute;left:2870px;top:1481px;overflow:visible;" width="18" height="12" viewBox="0 0 18 12"><path d="M1 1 H17 L9 10 Z" fill="#d8dadd"/></svg>
<div style="position:absolute;left:2696.00px;top:1474.83px;font-size:23.26px;line-height:23.26px;color:#f2f2f2;white-space:nowrap;transform:scaleX(0.9714);transform-origin:0 0;-webkit-text-stroke:0.25px #f2f2f2;">Cubo</div>
<div style="position:absolute;left:2572.00px;top:1521.83px;font-size:23.26px;line-height:23.26px;color:#d8dbe0;white-space:nowrap;transform:scaleX(1.0123);transform-origin:0 0;-webkit-text-stroke:0.25px #d8dbe0;">Linetype</div>
<div style="position:absolute;left:2683px;top:1516px;width:212px;height:35px;background:#4c566b;border-radius:4px;border:1px solid #2f3542;"></div>
<svg style="position:absolute;left:2870px;top:1528px;overflow:visible;" width="18" height="12" viewBox="0 0 18 12"><path d="M1 1 H17 L9 10 Z" fill="#d8dadd"/></svg>
<div style="position:absolute;left:2697px;top:1532.5px;width:64px;height:2.5px;background:#f2f2f2;"></div>
<div style="position:absolute;left:2790.00px;top:1521.83px;font-size:23.26px;line-height:23.26px;color:#f2f2f2;white-space:nowrap;transform:scaleX(0.9532);transform-origin:0 0;-webkit-text-stroke:0.25px #f2f2f2;">ByLa...</div>
<div style="position:absolute;left:2534.00px;top:1566.83px;font-size:23.26px;line-height:23.26px;color:#d8dbe0;white-space:nowrap;transform:scaleX(0.9999);transform-origin:0 0;-webkit-text-stroke:0.25px #d8dbe0;">Linetype sc...</div>
<div style="position:absolute;left:2683px;top:1561px;width:212px;height:35px;background:#4c566b;border-radius:4px;border:1px solid #2f3542;"></div>
<div style="position:absolute;left:2691.00px;top:1566.83px;font-size:23.26px;line-height:23.26px;color:#f2f2f2;white-space:nowrap;transform:scaleX(0.9624);transform-origin:0 0;-webkit-text-stroke:0.25px #f2f2f2;">1.000</div>
<div style="position:absolute;left:2549.00px;top:1612.83px;font-size:23.26px;line-height:23.26px;color:#d8dbe0;white-space:nowrap;transform:scaleX(1.0073);transform-origin:0 0;-webkit-text-stroke:0.25px #d8dbe0;">Lineweight</div>
<div style="position:absolute;left:2683px;top:1607px;width:212px;height:35px;background:#4c566b;border-radius:4px;border:1px solid #2f3542;"></div>
<svg style="position:absolute;left:2870px;top:1619px;overflow:visible;" width="18" height="12" viewBox="0 0 18 12"><path d="M1 1 H17 L9 10 Z" fill="#d8dadd"/></svg>
<div style="position:absolute;left:2696.00px;top:1612.83px;font-size:23.26px;line-height:23.26px;color:#f2f2f2;white-space:nowrap;transform:scaleX(0.9729);transform-origin:0 0;-webkit-text-stroke:0.25px #f2f2f2;">ByLayer</div>
<div style="position:absolute;left:2531.00px;top:1659.83px;font-size:23.26px;line-height:23.26px;color:#d8dbe0;white-space:nowrap;transform:scaleX(0.9907);transform-origin:0 0;-webkit-text-stroke:0.25px #d8dbe0;">Transparency</div>
<div style="position:absolute;left:2688px;top:1654px;width:123px;height:35px;background:#4c566b;border-radius:4px;border:1px solid #2f3542;"></div>
<div style="position:absolute;left:2689px;top:1658px;width:2px;height:26px;background:#5a8fd8;"></div>
<div style="position:absolute;left:2746px;top:1674px;width:1px;height:10px;background:#8d94a0;"></div>
<div style="position:absolute;left:2790.00px;top:1659.83px;font-size:23.26px;line-height:23.26px;color:#f2f2f2;white-space:nowrap;transform:scaleX(0.9279);transform-origin:0 0;-webkit-text-stroke:0.25px #f2f2f2;">0</div>
<div style="position:absolute;left:2820px;top:1654px;width:75px;height:35px;background:#4c566b;border-radius:4px;border:1px solid #2f3542;"></div>
<svg style="position:absolute;left:2833px;top:1659px;overflow:visible;" width="28" height="26" viewBox="0 0 28 26"><rect x="2" y="2" width="24" height="22" fill="none" stroke="#e0e0e0" stroke-width="2"/><rect x="4" y="4" width="4" height="4" fill="#e0e0e0"/><rect x="4" y="12" width="4" height="4" fill="#e0e0e0"/><rect x="4" y="20" width="4" height="4" fill="#e0e0e0"/><rect x="8" y="8" width="4" height="4" fill="#e0e0e0"/><rect x="8" y="16" width="4" height="4" fill="#e0e0e0"/><rect x="12" y="4" width="4" height="4" fill="#e0e0e0"/><rect x="12" y="12" width="4" height="4" fill="#e0e0e0"/><rect x="12" y="20" width="4" height="4" fill="#e0e0e0"/><rect x="16" y="8" width="4" height="4" fill="#e0e0e0"/><rect x="16" y="16" width="4" height="4" fill="#e0e0e0"/><rect x="20" y="4" width="4" height="4" fill="#e0e0e0"/><rect x="20" y="12" width="4" height="4" fill="#e0e0e0"/><rect x="20" y="20" width="4" height="4" fill="#e0e0e0"/></svg>
<svg style="position:absolute;left:2870px;top:1666px;overflow:visible;" width="18" height="12" viewBox="0 0 18 12"><path d="M1 1 H17 L9 10 Z" fill="#d8dadd"/></svg>
<div style="position:absolute;left:2561.00px;top:1705.83px;font-size:23.26px;line-height:23.26px;color:#d8dbe0;white-space:nowrap;transform:scaleX(1.0317);transform-origin:0 0;-webkit-text-stroke:0.25px #d8dbe0;">Text style</div>
<div style="position:absolute;left:2683px;top:1700px;width:212px;height:35px;background:#4c566b;border-radius:4px;border:1px solid #2f3542;"></div>
<svg style="position:absolute;left:2870px;top:1712px;overflow:visible;" width="18" height="12" viewBox="0 0 18 12"><path d="M1 1 H17 L9 10 Z" fill="#d8dadd"/></svg>
<div style="position:absolute;left:2696.00px;top:1705.83px;font-size:23.26px;line-height:23.26px;color:#f2f2f2;white-space:nowrap;transform:scaleX(1.1608);transform-origin:0 0;-webkit-text-stroke:0.25px #f2f2f2;">rd</div>
<div style="position:absolute;left:2535.00px;top:1750.83px;font-size:23.26px;line-height:23.26px;color:#d8dbe0;white-space:nowrap;transform:scaleX(0.9749);transform-origin:0 0;-webkit-text-stroke:0.25px #d8dbe0;">Dimension...</div>
<div style="position:absolute;left:2683px;top:1745px;width:212px;height:31px;background:#4c566b;border-radius:4px;border:1px solid #2f3542;border-bottom:none;border-radius:4px 4px 0 0;"></div>
<svg style="position:absolute;left:2870px;top:1757px;overflow:visible;" width="18" height="12" viewBox="0 0 18 12"><path d="M1 1 H17 L9 10 Z" fill="#d8dadd"/></svg>
<div style="position:absolute;left:2696.00px;top:1750.83px;font-size:23.26px;line-height:23.26px;color:#f2f2f2;white-space:nowrap;transform:scaleX(1.1608);transform-origin:0 0;-webkit-text-stroke:0.25px #f2f2f2;">rd</div>
<div style="position:absolute;left:2909px;top:1423px;width:10px;height:168px;background:#7d838f;border-radius:5px;"></div>
<div style="position:absolute;left:182px;top:1794px;width:2756px;height:44px;background:#3a4354;"></div>
<div style="position:absolute;left:182px;top:1838px;width:2756px;height:2px;background:#1e232b;"></div>
<div style="position:absolute;left:182px;top:1794px;width:118px;height:44px;background:#4a5570;"></div>
<div style="position:absolute;left:300px;top:1794px;width:2px;height:44px;background:#1e232b;"></div>
<div style="position:absolute;left:302px;top:1794px;width:44px;height:44px;background:#3a4252;"></div>
<div style="position:absolute;left:346px;top:1794px;width:2px;height:44px;background:#1e232b;"></div>
<div style="position:absolute;left:348px;top:1794px;width:116px;height:44px;background:#3a4252;"></div>
<div style="position:absolute;left:464px;top:1794px;width:2px;height:44px;background:#1e232b;"></div>
<div style="position:absolute;left:466px;top:1794px;width:116px;height:44px;background:#3a4252;"></div>
<div style="position:absolute;left:582px;top:1794px;width:2px;height:44px;background:#1e232b;"></div>
<div style="position:absolute;left:206.60px;top:1803.33px;font-size:23.26px;line-height:23.26px;color:#f4f4f4;white-space:nowrap;transform:scaleX(0.9947);transform-origin:0 0;-webkit-text-stroke:0.3px #f4f4f4;">Model</div>
<svg style="position:absolute;left:312px;top:1804px;overflow:visible;" width="24" height="24" viewBox="0 0 24 24"><path d="M12 1 V23 M1 12 H23" stroke="#e8e8e8" stroke-width="2"/></svg>
<div style="position:absolute;left:391.00px;top:1803.83px;font-size:23.26px;line-height:23.26px;color:#b8bcc4;white-space:nowrap;transform:scaleX(0.9141);transform-origin:0 0;-webkit-text-stroke:0.25px #b8bcc4;">A3</div>
<div style="position:absolute;left:482.00px;top:1803.83px;font-size:23.26px;line-height:23.26px;color:#b8bcc4;white-space:nowrap;transform:scaleX(0.9788);transform-origin:0 0;-webkit-text-stroke:0.25px #b8bcc4;">Layout2</div>
<div style="position:absolute;left:1965px;top:1794px;width:2px;height:44px;background:#2a303a;"></div>
<div style="position:absolute;left:1990.70px;top:1805.83px;font-size:23.26px;line-height:23.26px;color:#c3c7cd;white-space:nowrap;transform:scaleX(1.0190);transform-origin:0 0;-webkit-text-stroke:0.25px #c3c7cd;">-1.430, -0.341, 0.000</div>
<svg style="position:absolute;left:2222px;top:1800px;overflow:visible;" width="32" height="32" viewBox="0 0 32 32"><path d="M8 2 V30 M16 2 V30 M24 2 V30 M2 8 H30 M2 16 H30 M2 24 H30" stroke="#e6e6e6" stroke-width="2.4"/></svg>
<svg style="position:absolute;left:2268px;top:1803px;overflow:visible;" width="28" height="26" viewBox="0 0 28 26"><rect x="1" y="1" width="4" height="4" fill="#e6e6e6"/><rect x="1" y="10" width="4" height="4" fill="#e6e6e6"/><rect x="1" y="19" width="4" height="4" fill="#e6e6e6"/><rect x="11" y="1" width="4" height="4" fill="#e6e6e6"/><rect x="11" y="10" width="4" height="4" fill="#e6e6e6"/><rect x="11" y="19" width="4" height="4" fill="#e6e6e6"/><rect x="21" y="1" width="4" height="4" fill="#e6e6e6"/><rect x="21" y="10" width="4" height="4" fill="#e6e6e6"/><rect x="21" y="19" width="4" height="4" fill="#e6e6e6"/></svg>
<svg style="position:absolute;left:2309px;top:1799px;overflow:visible;" width="36" height="36" viewBox="0 0 36 36"><path d="M2 1 V32 H34" fill="none" stroke="#e6e6e6" stroke-width="2.2"/><rect x="2" y="22" width="9" height="10" fill="none" stroke="#e6e6e6" stroke-width="2"/></svg>
<div style="position:absolute;left:2350px;top:1796px;width:40px;height:40px;background:#6b8cbf;"></div>
<svg style="position:absolute;left:2350px;top:1796px;overflow:visible;" width="40" height="40" viewBox="0 0 40 40"><circle cx="18" cy="22" r="12" fill="none" stroke="#fafafa" stroke-width="2.2"/><path d="M18 22 L32 7 M18 22 H37" stroke="#fafafa" stroke-width="2.2"/></svg>
<svg style="position:absolute;left:2397px;top:1798px;overflow:visible;" width="36" height="36" viewBox="0 0 36 36"><path d="M8 3 V16 M2 9 H14" stroke="#e6e6e6" stroke-width="2.2"/><rect x="13" y="19" width="19" height="8" fill="#e6e6e6"/><rect x="15" y="21" width="4" height="4" fill="#3a4354"/></svg>
<svg style="position:absolute;left:2441px;top:1800px;overflow:visible;" width="34" height="32" viewBox="0 0 34 32"><path d="M1 3 H33" stroke="#e6e6e6" stroke-width="2"/><path d="M1 10 H33" stroke="#e6e6e6" stroke-width="3"/><path d="M1 18.5 H33" stroke="#e6e6e6" stroke-width="4.5"/><path d="M1 27 H33" stroke="#e6e6e6" stroke-width="6"/></svg>
<div style="position:absolute;left:2482px;top:1796px;width:40px;height:40px;background:#6b8cbf;"></div>
<div style="position:absolute;left:2526px;top:1796px;width:40px;height:40px;background:#6b8cbf;"></div>
<div style="position:absolute;left:2570px;top:1796px;width:40px;height:40px;background:#6b8cbf;"></div>
<div style="position:absolute;left:2614px;top:1796px;width:40px;height:40px;background:#6b8cbf;"></div>
<div style="position:absolute;left:2658px;top:1796px;width:40px;height:40px;background:#6b8cbf;"></div>
<svg style="position:absolute;left:2482px;top:1796px;overflow:visible;" width="40" height="40" viewBox="0 0 40 40"><rect x="6" y="6" width="28" height="28" fill="none" stroke="#fafafa" stroke-width="2.2"/><rect x="9.0" y="9.0" width="4.4" height="4.4" fill="#fafafa"/><rect x="9.0" y="17.8" width="4.4" height="4.4" fill="#fafafa"/><rect x="9.0" y="26.6" width="4.4" height="4.4" fill="#fafafa"/><rect x="13.4" y="13.4" width="4.4" height="4.4" fill="#fafafa"/><rect x="13.4" y="22.2" width="4.4" height="4.4" fill="#fafafa"/><rect x="17.8" y="9.0" width="4.4" height="4.4" fill="#fafafa"/><rect x="17.8" y="17.8" width="4.4" height="4.4" fill="#fafafa"/><rect x="17.8" y="26.6" width="4.4" height="4.4" fill="#fafafa"/><rect x="22.2" y="13.4" width="4.4" height="4.4" fill="#fafafa"/><rect x="22.2" y="22.2" width="4.4" height="4.4" fill="#fafafa"/><rect x="26.6" y="9.0" width="4.4" height="4.4" fill="#fafafa"/><rect x="26.6" y="17.8" width="4.4" height="4.4" fill="#fafafa"/><rect x="26.6" y="26.6" width="4.4" height="4.4" fill="#fafafa"/></svg>
<svg style="position:absolute;left:2526px;top:1796px;overflow:visible;" width="40" height="40" viewBox="0 0 40 40"><path d="M10 5 H6 V30 H10 M28 5 H32 V17" fill="none" stroke="#fafafa" stroke-width="2"/><rect x="13" y="7" width="12" height="7" fill="none" stroke="#fafafa" stroke-width="1.8"/><circle cx="17" cy="22" r="4" fill="#fafafa"/><path d="M22 18 L35 30 L29 31 L26 37 Z" fill="#fafafa"/></svg>
<svg style="position:absolute;left:2570px;top:1796px;overflow:visible;" width="40" height="40" viewBox="0 0 40 40"><path d="M5 32 H34 M5 32 L30 8" fill="none" stroke="#fafafa" stroke-width="2.2"/><circle cx="17.5" cy="20" r="3" fill="#fafafa"/></svg>
<svg style="position:absolute;left:2614px;top:1796px;overflow:visible;" width="40" height="40" viewBox="0 0 40 40"><rect x="5" y="5" width="9" height="9" fill="none" stroke="#fafafa" stroke-width="2"/><path d="M10 14 V34 H36 V10 H14" fill="none" stroke="#fafafa" stroke-width="2.2"/></svg>
<svg style="position:absolute;left:2658px;top:1796px;overflow:visible;" width="40" height="40" viewBox="0 0 40 40"><path d="M18 5 L29 36 L18 28 L6 36 Z" fill="#fafafa"/><circle cx="31" cy="12" r="7" fill="#fafafa"/></svg>
<svg style="position:absolute;left:2704px;top:1798px;overflow:visible;" width="38" height="38" viewBox="0 0 38 38"><path d="M15 3 L27 36 L15 28 L3 36 Z" fill="#cfd1d4"/><path d="M26 2 L20 12 H25 L22 20 L31 9 H26 L29 2 Z" fill="#f0c040"/></svg>
<svg style="position:absolute;left:2750px;top:1798px;overflow:visible;" width="34" height="38" viewBox="0 0 34 38"><path d="M15 3 L27 36 L15 28 L3 36 Z" fill="#cfd1d4"/></svg>
<div style="position:absolute;left:2786.40px;top:1805.56px;font-size:21.80px;line-height:21.80px;color:#b4b8be;white-space:nowrap;transform:scaleX(0.8579);transform-origin:0 0;-webkit-text-stroke:0.25px #b4b8be;">1:1</div>
<svg style="position:absolute;left:2820px;top:1812px;overflow:visible;" width="12" height="9" viewBox="0 0 12 9"><path d="M0 0 H12 L6 8 Z" fill="#c8cbd0"/></svg>
<svg style="position:absolute;left:2849px;top:1800px;overflow:visible;" width="36" height="34" viewBox="0 0 36 34"><rect x="1" y="1" width="13" height="13" fill="none" stroke="#e6e6e6" stroke-width="2"/><circle cx="26" cy="13" r="6.5" fill="none" stroke="#e6e6e6" stroke-width="2"/><path d="M14 22 L21 32 H7 Z" fill="none" stroke="#e6e6e6" stroke-width="2"/></svg>
<svg style="position:absolute;left:2893px;top:1800px;overflow:visible;" width="34" height="34" viewBox="0 0 34 34"><g transform="translate(16,16)"><rect x="-3.5" y="-16" width="7" height="32" rx="1" fill="#e6e6e6" transform="rotate(0)"/><rect x="-3.5" y="-16" width="7" height="32" rx="1" fill="#e6e6e6" transform="rotate(45)"/><rect x="-3.5" y="-16" width="7" height="32" rx="1" fill="#e6e6e6" transform="rotate(90)"/><rect x="-3.5" y="-16" width="7" height="32" rx="1" fill="#e6e6e6" transform="rotate(135)"/><circle r="11.5" fill="#e6e6e6"/><circle r="5" fill="#3a4354"/></g></svg>
<svg style="position:absolute;left:442px;top:34px;overflow:visible;" width="34" height="26" viewBox="0 0 34 26"><path d="M1 1 H25 L33 9 V25 H1 Z" fill="#d9d9d9"/><path d="M25 1 V9 H33" fill="#f4f4f4"/></svg>
<svg style="position:absolute;left:508px;top:34px;overflow:visible;" width="52" height="27" viewBox="0 0 52 27"><path d="M1 4 V25 L10 8 H28 V6 H16 L12 1 H1 Z" fill="#d9d9d9"/><path d="M10 9 H38 L30 25 H2 Z" fill="#d9d9d9"/></svg>
<svg style="position:absolute;left:536px;top:25px;overflow:visible;" width="22" height="22" viewBox="0 0 22 22"><circle cx="11" cy="11" r="9.8" fill="#e8783a" stroke="#fff4e8" stroke-width="1.8"/></svg>
<svg style="position:absolute;left:576px;top:31px;overflow:visible;" width="31" height="31" viewBox="0 0 31 31"><path d="M1 1 H29 V30 H3 L1 28 Z" fill="#b9b9b9"/><rect x="7" y="1" width="17" height="10" fill="#f0f0f0"/><rect x="7" y="20" width="17" height="10" fill="#f0f0f0"/><rect x="9" y="22" width="3" height="6" fill="#3a4354"/></svg>
<svg style="position:absolute;left:640px;top:31px;overflow:visible;" width="34" height="33" viewBox="0 0 34 33"><path d="M1 1 H29 V30 H3 L1 28 Z" fill="#b9b9b9"/><rect x="7" y="1" width="17" height="10" fill="#f0f0f0"/><rect x="7" y="20" width="17" height="10" fill="#f0f0f0"/><rect x="9" y="22" width="3" height="6" fill="#3a4354"/><path d="M16 30 L27 17 L32 21 L21 33 L15 34 Z" fill="#f2c86a" stroke="#3a4354" stroke-width="1"/><path d="M27 17 L29 14.5 A2.5 2.5 0 0 1 34 18.5 L32 21 Z" fill="#e86060"/></svg>
<svg style="position:absolute;left:769px;top:37px;overflow:visible;" width="34" height="20" viewBox="0 0 34 20"><path d="M0 9 L12 0 V5 C22 5 30 8 32 17 C28 12 22 12 12 12 V18 Z" fill="#d9d9d9"/></svg>
<svg style="position:absolute;left:834px;top:37px;overflow:visible;" width="34" height="20" viewBox="0 0 34 20"><g transform="translate(33,0) scale(-1,1)"><path d="M0 9 L12 0 V5 C22 5 30 8 32 17 C28 12 22 12 12 12 V18 Z" fill="#d9d9d9"/></g></svg>
<svg style="position:absolute;left:963px;top:30px;overflow:visible;" width="34" height="33" viewBox="0 0 34 33"><g transform="translate(0,0)"><rect x="6" y="1" width="21" height="8" fill="#f0f0f0"/><path d="M1 11 H32 V25 H1 Z" fill="#d9d9d9"/><path d="M1 20 H32 V25 H1 Z" fill="#a9a9a9"/><rect x="6" y="21" width="21" height="11" fill="#f8f8f8"/><rect x="8" y="23" width="17" height="7" fill="#90c3f2"/></g></svg>
<svg style="position:absolute;left:1028px;top:31px;overflow:visible;" width="40" height="34" viewBox="0 0 40 34"><g transform="scale(0.85)"><g transform="translate(0,0)"><rect x="6" y="1" width="21" height="8" fill="#f0f0f0"/><path d="M1 11 H32 V25 H1 Z" fill="#d9d9d9"/><path d="M1 20 H32 V25 H1 Z" fill="#a9a9a9"/><rect x="6" y="21" width="21" height="11" fill="#f8f8f8"/></g></g><path d="M14 26 H24 V21 L33 28 L24 35 V30 H14 Z" fill="#90c3f2"/></svg>
<svg style="position:absolute;left:1056px;top:25px;overflow:visible;" width="22" height="22" viewBox="0 0 22 22"><circle cx="11" cy="11" r="9.8" fill="#e8783a" stroke="#fff4e8" stroke-width="1.8"/></svg>
<svg style="position:absolute;left:1096px;top:31px;overflow:visible;" width="32" height="33" viewBox="0 0 32 33"><path d="M1 1 H20 L26 7 V24 H1 Z" fill="#d9d9d9"/><path d="M7 1 V24 M1 7 H26" stroke="#a8a8a8" stroke-width="2"/><path d="M20 1 V7 H26" fill="#f4f4f4"/><rect x="13" y="16" width="18" height="16" fill="#f4f4f4"/><rect x="13" y="16" width="18" height="4" fill="#a8a8a8"/><path d="M17 24 H19 M21 24 H28 M17 28 H19 M21 28 H28" stroke="#3a4354" stroke-width="1.6"/></svg>
<svg style="position:absolute;left:1161px;top:31px;overflow:visible;" width="34" height="33" viewBox="0 0 34 33"><path d="M1 1 H20 L26 7 V24 H1 Z" fill="#d9d9d9"/><path d="M7 1 V24 M1 7 H26" stroke="#a8a8a8" stroke-width="2"/><path d="M20 1 V7 H26" fill="#f4f4f4"/><path d="M14 31 L25 18 L30 22 L19 34 L13 35 Z" fill="#f2c86a" stroke="#3a4354" stroke-width="1"/><path d="M25 18 L27 15.5 A2.5 2.5 0 0 1 32 19.5 L30 22 Z" fill="#e86060"/></svg>
<svg style="position:absolute;left:1288px;top:31px;overflow:visible;" width="34" height="33" viewBox="0 0 34 33"><path d="M5 1 H25 L33 9 V32 H5 Z" fill="#d9d9d9"/><path d="M25 1 V9 H33" fill="#f4f4f4"/><path d="M0 10 H12 V4 L22 12 L12 20 V14 H0 Z" fill="#90c3f2" stroke="#3a4354" stroke-width="1"/></svg>
<svg style="position:absolute;left:1354px;top:31px;overflow:visible;" width="34" height="33" viewBox="0 0 34 33"><path d="M1 1 H21 L29 9 V32 H1 Z" fill="#d9d9d9"/><path d="M21 1 V9 H29" fill="#f4f4f4"/><path d="M12 20 H23 V14 L33 22 L23 30 V24 H12 Z" fill="#90c3f2" stroke="#3a4354" stroke-width="1"/></svg>
<svg style="position:absolute;left:1420px;top:31px;overflow:visible;" width="34" height="33" viewBox="0 0 34 33"><path d="M1 8 H27 L33 14 V32 H1 Z" fill="#d9d9d9"/><path d="M27 8 V14 H33" fill="#f4f4f4"/><path d="M5 17 V5 A4 4 0 0 1 13 5 V15 A2.5 2.5 0 0 1 8 15 V7" fill="none" stroke="#90c3f2" stroke-width="2.2"/></svg>
<svg style="position:absolute;left:1486px;top:31px;overflow:visible;" width="34" height="33" viewBox="0 0 34 33"><path d="M1 4 H24 V31 H3 L1 29 Z" fill="#b9b9b9"/><rect x="6" y="4" width="13" height="9" fill="#f0f0f0"/><rect x="6" y="22" width="14" height="9" fill="#f0f0f0"/><circle cx="25" cy="9" r="8.5" fill="#3a4354"/><circle cx="25" cy="9" r="7" fill="none" stroke="#90c3f2" stroke-width="2"/><path d="M18 9 H32 M25 2 V16" stroke="#90c3f2" stroke-width="1.6"/><ellipse cx="25" cy="9" rx="3" ry="7" fill="none" stroke="#90c3f2" stroke-width="1.6"/></svg>
<svg style="position:absolute;left:1614px;top:30px;overflow:visible;" width="34" height="34" viewBox="0 0 34 34"><path d="M1 29 V1 H29 V19 M1 29 H19" fill="none" stroke="#d9d9d9" stroke-width="2.2"/><circle cx="24" cy="26" r="5" fill="none" stroke="#e8e8e8" stroke-width="2.2"/><path d="M28 30 L33 34" stroke="#c9a37a" stroke-width="2.6"/></svg>
<svg style="position:absolute;left:1680px;top:33px;overflow:visible;" width="34" height="31" viewBox="0 0 34 31"><path d="M9 29 C4 24 1 19 1 16 C1 14 4 14 6 17 L8 19 V6 C8 3 12 3 12 6 V14 V3 C12 0 16 0 16 3 V14 V4 C16 1 20 1 20 4 V15 V8 C20 5 24 5 24 8 V19 C24 26 20 30 15 30 Z" fill="#d9d9d9"/></svg>
<svg style="position:absolute;left:1746px;top:30px;overflow:visible;" width="34" height="34" viewBox="0 0 34 34"><path d="M16 1 V33" stroke="#90c3f2" stroke-width="2.2"/><path d="M22 10 C30 11 33 14 33 17 C33 21 25 24 16 24 C7 24 1 21 1 17 C1 13 7 10 13 10" fill="none" stroke="#f0f0f0" stroke-width="2.4"/><path d="M21 6 L26 10 L21 14 Z" fill="#f0f0f0"/></svg>
<svg style="position:absolute;left:1876px;top:31px;overflow:visible;" width="34" height="33" viewBox="0 0 34 33"><path d="M1 1 H24 V18 L12 30 H1 Z" fill="#d9d9d9"/><rect x="4" y="4" width="16" height="9" fill="#90c3f2"/><path d="M4 18 H16 M4 23 H10 M8 15 V21" stroke="#3a4354" stroke-width="1.6"/><path d="M14 24 L22 16 L29 23 L21 31 Z" fill="#f2c86a"/><path d="M22 16 L26 12 L33 19 L29 23 Z" fill="#d9d9d9" stroke="#3a4354" stroke-width="1"/></svg>
<svg style="position:absolute;left:1940px;top:30px;overflow:visible;" width="34" height="34" viewBox="0 0 34 34"><path d="M1 11 L15 21 L9 22 L13 31 L9 33 L5 24 L1 28 Z" fill="#f4f4f4"/><path d="M14 1 L9 9 H14 L11 15 L20 6 H15 L18 1 Z" fill="#f0c040"/><rect x="14" y="14" width="19" height="19" fill="#f0f0f0"/><path d="M18 19 H20 M22 19 H30 M18 24 H20 M22 24 H30 M18 29 H20 M22 29 H30" stroke="#90c3f2" stroke-width="2"/></svg>
<svg style="position:absolute;left:2006px;top:31px;overflow:visible;" width="34" height="33" viewBox="0 0 34 33"><rect x="1" y="1" width="19" height="20" fill="#b9b9b9"/><circle cx="19" cy="13" r="10" fill="#77c98a"/><circle cx="12" cy="22" r="9" fill="#77c98a" stroke="#3a4354" stroke-width="1.5"/><path d="M20 12 V33 M9 22 H33" stroke="#3a4354" stroke-width="5"/><path d="M20 12 V33 M9 22 H33" stroke="#f4f4f4" stroke-width="2.2"/><rect x="17" y="19" width="6" height="6" fill="none" stroke="#f4f4f4" stroke-width="1.6"/></svg>
<svg style="position:absolute;left:2072px;top:31px;overflow:visible;" width="34" height="33" viewBox="0 0 34 33"><circle cx="7" cy="7" r="6.5" fill="#77c98a"/><circle cx="26" cy="25" r="7" fill="#8fc4f4"/><path d="M16 7 H25 V14" fill="none" stroke="#f4f4f4" stroke-width="2"/><path d="M21 13 H29 L25 18 Z" fill="#f4f4f4"/></svg>
<svg style="position:absolute;left:2141px;top:31px;overflow:visible;" width="28" height="33" viewBox="0 0 28 33"><path d="M1 1 H20 L27 8 V31 H1 Z" fill="#d9d9d9"/><path d="M20 1 V8 H27" fill="#f4f4f4"/><path d="M12 10 V20" stroke="#c9a37a" stroke-width="2"/><path d="M8 20 H16 L19 32 H5 Z" fill="#f0c060"/><rect x="7" y="20" width="10" height="3" fill="#b9c5d0"/></svg>
<svg style="position:absolute;left:2204px;top:31px;overflow:visible;" width="40" height="33" viewBox="0 0 40 33"><circle cx="12" cy="17" r="10" fill="#6b7180" stroke="#c4c4c4" stroke-width="2.2"/><rect x="12" y="17" width="17" height="15" fill="#555b68" stroke="#c4c4c4" stroke-width="2.2"/><path d="M19 3 L17 15 M25 3 L23 15 M15 7 H28 M14 11 H27" stroke="#90c3f2" stroke-width="2"/></svg>
<svg style="position:absolute;left:2232.6px;top:26px;overflow:visible;" width="22" height="22" viewBox="0 0 22 22"><circle cx="11" cy="11" r="9.8" fill="#e8783a" stroke="#fff4e8" stroke-width="1.8"/></svg>
<svg style="position:absolute;left:2332px;top:30px;overflow:visible;" width="34" height="34" viewBox="0 0 34 34"><rect x="1" y="3" width="12" height="28" fill="#d9d9d9"/><rect x="7" y="9" width="6" height="6" fill="#d04040"/><rect x="5" y="18" width="8" height="5" fill="#56b050"/><path d="M8 11 V13 M7 20.5 H11" stroke="#e6e6e6" stroke-width="1.5"/><rect x="16" y="1" width="2.4" height="32" fill="#90c3f2"/><path d="M21 3 H28 L33 8 V31 H21 Z" fill="#d9d9d9"/><path d="M28 3 V8 H33" fill="#f4f4f4"/><rect x="23" y="11" width="8" height="5" fill="none" stroke="#8a8a8a" stroke-width="2"/><rect x="23" y="19" width="6" height="6" fill="none" stroke="#8a8a8a" stroke-width="2"/></svg>
<svg style="position:absolute;left:2399px;top:35px;overflow:visible;" width="32" height="27" viewBox="0 0 32 27"><path d="M0 16 L28 2 L10 19 Z M10 19 L28 2 L12 26 Z M17 23 L28 2 L28 26 Z" fill="#90c3f2"/><path d="M10 19 L28 2 M17 22 L28 2" stroke="#3a4354" stroke-width="1.2"/></svg>
<svg style="position:absolute;left:2426px;top:25px;overflow:visible;" width="22" height="22" viewBox="0 0 22 22"><circle cx="11" cy="11" r="9.8" fill="#e8783a" stroke="#fff4e8" stroke-width="1.8"/></svg>
<svg style="position:absolute;left:2465px;top:32px;overflow:visible;" width="34" height="30" viewBox="0 0 34 30"><rect x="7" y="8" width="26" height="21" fill="#d9d9d9"/><rect x="1" y="1" width="26" height="21" fill="#5c6270" stroke="#7aa8d8" stroke-width="1.6"/><path d="M3 12 C6 0 8 18 11 12 C13 8 15 16 18 15 C21 14 23 15 25 14" fill="none" stroke="#90c3f2" stroke-width="1.4"/></svg>
<svg style="position:absolute;left:2492px;top:25px;overflow:visible;" width="22" height="22" viewBox="0 0 22 22"><circle cx="11" cy="11" r="9.8" fill="#e8783a" stroke="#fff4e8" stroke-width="1.8"/></svg>
</body></html>
